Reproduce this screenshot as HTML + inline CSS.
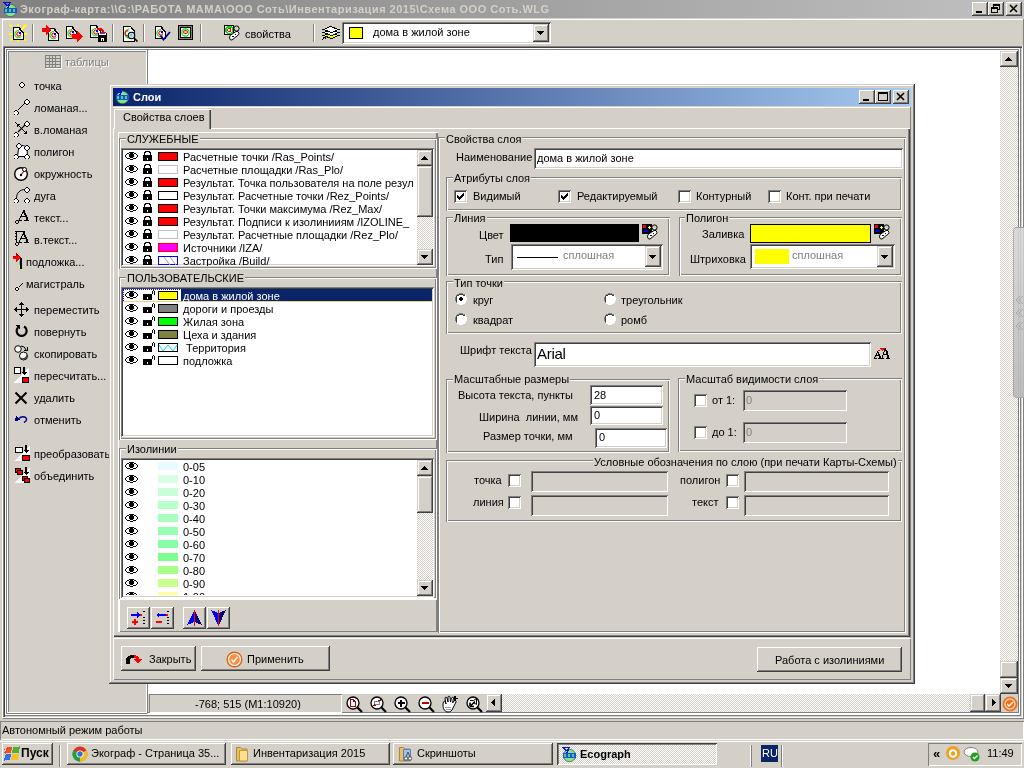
<!DOCTYPE html><html><head><meta charset="utf-8"><style>
html,body{margin:0;padding:0;width:1024px;height:768px;overflow:hidden;background:#d4d0c8}
body div,body svg{position:absolute;box-sizing:border-box}
.t{will-change:transform;font-family:"Liberation Sans",sans-serif;font-size:11px;line-height:13px;white-space:nowrap;color:#000}
.b{font-weight:bold}
</style></head><body>
<div style="left:0px;top:0px;width:1024px;height:18px;background:linear-gradient(to right,#808080,#c0c0c0)"></div>
<div class="t" style="left:20px;top:3px;font-weight:bold;color:#d4d0c8;letter-spacing:0.5px">Экограф-карта:\\G:\РАБОТА МАМА\ООО Соть\Инвентаризация 2015\Схема ООО Соть.WLG</div>
<svg style="left:2px;top:1px" width="16" height="16" viewBox="0 0 16 16" shape-rendering="crispEdges"><circle cx="8.5" cy="9.5" r="6.2" fill="#78e888" stroke="#506050" stroke-width="0.8" shape-rendering="auto"/><rect x="2" y="7" width="13" height="5" fill="#2050e0"/><path d="M3 8h2v3H3zM7 8h2v3H7zM11 8h2v3h-2z" fill="#50d070"/><path d="M1 1.5h8M2 1.5l4 3.5M8 1l-2 6" stroke="#0010e0" stroke-width="1.4" fill="none"/></svg>
<div style="left:972px;top:2px;width:16px;height:14px;background:#d4d0c8;box-shadow:inset -1px -1px #404040,inset 1px 1px #fff,inset -2px -2px #808080,inset 2px 2px #d4d0c8"></div>
<svg style="left:972px;top:2px" width="16" height="14" viewBox="0 0 16 14" shape-rendering="crispEdges"><rect x="4" y="9" width="6" height="2" fill="#000"/></svg>
<div style="left:988px;top:2px;width:16px;height:14px;background:#d4d0c8;box-shadow:inset -1px -1px #404040,inset 1px 1px #fff,inset -2px -2px #808080,inset 2px 2px #d4d0c8"></div>
<svg style="left:991px;top:4px" width="9" height="9" viewBox="0 0 9 9" shape-rendering="crispEdges"><path d="M2 0h7v1h-7zM2 1h7v1h-7zM2 2h1v1h-1zM8 2h1v1h-1zM0 3h7v1h-7zM8 3h1v1h-1zM0 4h7v1h-7zM8 4h1v1h-1zM0 5h1v1h-1zM6 5h3v1h-3zM0 6h1v1h-1zM6 6h1v1h-1zM0 7h1v1h-1zM6 7h1v1h-1zM0 8h7v1h-7z" fill="#000"/></svg>
<div style="left:1006px;top:2px;width:16px;height:14px;background:#d4d0c8;box-shadow:inset -1px -1px #404040,inset 1px 1px #fff,inset -2px -2px #808080,inset 2px 2px #d4d0c8"></div>
<svg style="left:1006px;top:2px" width="16" height="14" viewBox="0 0 16 14" shape-rendering="crispEdges"><path d="M4 3l7 7M11 3l-7 7" stroke="#000" stroke-width="1.6" shape-rendering="auto"/></svg>
<div style="left:2px;top:19px;width:1022px;height:27px;background:#d4d0c8;box-shadow:inset 1px 1px #fff"></div>
<div style="left:32px;top:24px;width:1px;height:18px;background:#808080"></div>
<div style="left:33px;top:24px;width:1px;height:18px;background:#fff"></div>
<div style="left:112px;top:24px;width:1px;height:18px;background:#808080"></div>
<div style="left:113px;top:24px;width:1px;height:18px;background:#fff"></div>
<div style="left:143px;top:24px;width:1px;height:18px;background:#808080"></div>
<div style="left:144px;top:24px;width:1px;height:18px;background:#fff"></div>
<div style="left:200px;top:24px;width:1px;height:18px;background:#808080"></div>
<div style="left:201px;top:24px;width:1px;height:18px;background:#fff"></div>
<div style="left:313px;top:24px;width:1px;height:18px;background:#808080"></div>
<div style="left:314px;top:24px;width:1px;height:18px;background:#fff"></div>
<svg style="left:9px;top:24px" width="18" height="18" viewBox="0 0 18 18" shape-rendering="crispEdges"><path d="M1 1l2 2M17 1l-5 5M1 17l2-2M17 17l-2-2M0 10h3M15 10h3M9 0v2M9 16v2" stroke="#ffff00" stroke-width="1.6"/></svg>
<svg style="left:13px;top:27px" width="11" height="13" viewBox="0 0 11 13" shape-rendering="crispEdges"><path d="M0.5 0.5h5.5l4 4.5v7.5h-9.5z" fill="#fff" stroke="#000"/><path d="M5.5 0.5l4.5 5" stroke="#000" stroke-width="1.3"/><path d="M8.2 9.5A3.6 3.6 0 1 1 6 3.6" fill="none" stroke="#00e000" stroke-width="1.1" shape-rendering="auto"/><path d="M7.8 7.2A2 2 0 1 1 6.5 5.2" fill="none" stroke="#ff0000" stroke-width="1.1" shape-rendering="auto"/><rect x="6" y="5" width="1.5" height="1.5" fill="#0000ff"/></svg>
<svg style="left:48px;top:28px" width="11" height="13" viewBox="0 0 11 13" shape-rendering="crispEdges"><path d="M0.5 0.5h5.5l4 4.5v7.5h-9.5z" fill="#fff" stroke="#000"/><path d="M5.5 0.5l4.5 5" stroke="#000" stroke-width="1.3"/><path d="M8.2 9.5A3.6 3.6 0 1 1 6 3.6" fill="none" stroke="#00e000" stroke-width="1.1" shape-rendering="auto"/><path d="M7.8 7.2A2 2 0 1 1 6.5 5.2" fill="none" stroke="#ff0000" stroke-width="1.1" shape-rendering="auto"/><rect x="6" y="5" width="1.5" height="1.5" fill="#0000ff"/></svg>
<svg style="left:42px;top:25px" width="10" height="11" viewBox="0 0 10 11" shape-rendering="crispEdges"><path d="M0 3h4v-3l5 5-5 5v-3h-4z" fill="#ff0000"/></svg>
<svg style="left:66px;top:26px" width="11" height="13" viewBox="0 0 11 13" shape-rendering="crispEdges"><path d="M0.5 0.5h5.5l4 4.5v7.5h-9.5z" fill="#fff" stroke="#000"/><path d="M5.5 0.5l4.5 5" stroke="#000" stroke-width="1.3"/><path d="M8.2 9.5A3.6 3.6 0 1 1 6 3.6" fill="none" stroke="#00e000" stroke-width="1.1" shape-rendering="auto"/><path d="M7.8 7.2A2 2 0 1 1 6.5 5.2" fill="none" stroke="#ff0000" stroke-width="1.1" shape-rendering="auto"/><rect x="6" y="5" width="1.5" height="1.5" fill="#0000ff"/></svg>
<svg style="left:72px;top:31px" width="11" height="11" viewBox="0 0 11 11" shape-rendering="crispEdges"><path d="M0 3h5v-3l6 5.5-6 5.5v-3h-5z" fill="#ff0000"/></svg>
<svg style="left:90px;top:25px" width="11" height="13" viewBox="0 0 11 13" shape-rendering="crispEdges"><path d="M0.5 0.5h5.5l4 4.5v7.5h-9.5z" fill="#fff" stroke="#000"/><path d="M5.5 0.5l4.5 5" stroke="#000" stroke-width="1.3"/><path d="M8.2 9.5A3.6 3.6 0 1 1 6 3.6" fill="none" stroke="#00e000" stroke-width="1.1" shape-rendering="auto"/><path d="M7.8 7.2A2 2 0 1 1 6.5 5.2" fill="none" stroke="#ff0000" stroke-width="1.1" shape-rendering="auto"/><rect x="6" y="5" width="1.5" height="1.5" fill="#0000ff"/></svg>
<svg style="left:96px;top:26px" width="11" height="16" viewBox="0 0 11 16" shape-rendering="crispEdges"><path d="M1 2h3q3 0 4 3v1h2l-3 3-3-3h2v-1q-1-1-2-1h-3z" fill="#ff0000"/><rect x="2" y="7" width="9" height="9" fill="#000"/><rect x="3" y="7" width="7" height="2" fill="#fff"/><rect x="4" y="7" width="5" height="1" fill="#2050ff"/><rect x="5" y="12" width="3" height="3" fill="#fff"/><rect x="6" y="13" width="1" height="2" fill="#000"/></svg>
<svg style="left:123px;top:26px" width="16" height="16" viewBox="0 0 16 16" shape-rendering="crispEdges"><path d="M0.5 0.5h7l4 4.5v10.5h-11z" fill="#fff" stroke="#000"/><path d="M7.5 0.5l4 4.5" stroke="#000" stroke-width="1.3"/><path d="M8.5 11.5A4.5 4.5 0 1 1 6.5 3" fill="none" stroke="#00e000" stroke-width="1.2" shape-rendering="auto"/><path d="M7 8A2.5 2.5 0 1 1 5.5 5" fill="none" stroke="#ff0000" stroke-width="1.2" shape-rendering="auto"/><circle cx="8.5" cy="9.5" r="3.3" fill="#c0d8e0" stroke="#000" stroke-width="1.1" shape-rendering="auto"/><rect x="7" y="8" width="2" height="2" fill="#40e0ff"/><path d="M11 12l3.5 3.5" stroke="#000" stroke-width="1.6" shape-rendering="auto"/></svg>
<svg style="left:155px;top:26px" width="11" height="13" viewBox="0 0 11 13" shape-rendering="crispEdges"><path d="M0.5 0.5h5.5l4 4.5v7.5h-9.5z" fill="#fff" stroke="#000"/><path d="M5.5 0.5l4.5 5" stroke="#000" stroke-width="1.3"/><path d="M8.2 9.5A3.6 3.6 0 1 1 6 3.6" fill="none" stroke="#00e000" stroke-width="1.1" shape-rendering="auto"/><path d="M7.8 7.2A2 2 0 1 1 6.5 5.2" fill="none" stroke="#ff0000" stroke-width="1.1" shape-rendering="auto"/><rect x="6" y="5" width="1.5" height="1.5" fill="#0000ff"/></svg>
<svg style="left:159px;top:31px" width="12" height="10" viewBox="0 0 12 10" shape-rendering="crispEdges"><path d="M1.5 4.5l3 4 6.5-7.5" fill="none" stroke="#000080" stroke-width="1.8" shape-rendering="auto"/></svg>
<svg style="left:178px;top:25px" width="15" height="15" viewBox="0 0 15 15" shape-rendering="crispEdges"><rect x="0.5" y="0.5" width="14" height="14" fill="#808080" stroke="#000"/><rect x="2.5" y="2.5" width="10" height="10" fill="#fff" stroke="#000"/><circle cx="7.5" cy="7.5" r="3.6" fill="none" stroke="#00e000" stroke-width="1.1" shape-rendering="auto"/><ellipse cx="7.5" cy="7" rx="2" ry="1.5" fill="none" stroke="#ff0000" stroke-width="1.1" shape-rendering="auto"/></svg>
<svg style="left:224px;top:25px" width="17" height="17" viewBox="0 0 17 17" shape-rendering="crispEdges"><rect x="0" y="0" width="10" height="10" fill="#000"/><rect x="1" y="1" width="8" height="8" fill="#fff"/><path d="M3 1h4l2 2v4l-2 2H3L1 7V3z" fill="#00e000"/><path d="M3.5 2.5h3l1 1v3l-1 1h-3l-1-1v-3z" fill="#fff"/><path d="M4 3h2l1 1v2l-1 1H4L3 6V4z" fill="#ff0000"/><rect x="4" y="4" width="2" height="2" fill="#fff"/><circle cx="12.5" cy="3.5" r="2.6" fill="none" stroke="#000" stroke-width="1" shape-rendering="auto"/><path d="M6 10.5L12 6.5Q14.5 5.5 15 8.5Q15 10 13 11L8 15Q6 15.5 5.5 13Z" fill="#fff" stroke="#000" stroke-width="1" shape-rendering="auto"/><path d="M8 11.5h2M11 9h1" stroke="#000"/></svg>
<div class="t" style="left:245px;top:28px;">свойства</div>
<svg style="left:322px;top:26px" width="18" height="15" viewBox="0 0 18 15" shape-rendering="crispEdges"><path d="M1.5 9.5l7-3 8 3-7 3z" fill="#ffff00" stroke="#000"/><path d="M1.5 6.5l7-3 8 3-7 3z" fill="#fff" stroke="#000"/><path d="M1.5 3.5l7-3 8 3-7 3z" fill="#fff" stroke="#000"/><path d="M4 11.5l8 0" stroke="#000" stroke-width="0"/><path d="M0 14l3-3M1 11h2v2" fill="none" stroke="#000"/></svg>
<div style="left:342px;top:22px;width:209px;height:22px;background:#fff;box-shadow:inset 1px 1px #808080,inset -1px -1px #fff,inset 2px 2px #404040,inset -2px -2px #d4d0c8"></div>
<div style="left:349px;top:27px;width:14px;height:12px;background:#ffff00;box-shadow:inset 0 0 0 1px #000"></div>
<div class="t" style="left:373px;top:26px;">дома в жилой зоне</div>
<div style="left:533px;top:24px;width:16px;height:18px;background:#d4d0c8;box-shadow:inset -1px -1px #404040,inset 1px 1px #d4d0c8,inset -2px -2px #808080,inset 2px 2px #fff"></div>
<svg style="left:533px;top:24px" width="16" height="18" viewBox="0 0 16 18" shape-rendering="crispEdges"><path d="M4 7h7v1h-7zM5 8h5v1h-5zM6 9h3v1h-3zM7 10h1v1h-1z" fill="#000"/></svg>
<div style="left:3px;top:46px;width:1020px;height:1px;background:#808080"></div>
<div style="left:3px;top:46px;width:1px;height:672px;background:#808080"></div>
<div style="left:2px;top:46px;width:1px;height:672px;background:#fff"></div>
<div style="left:4px;top:47px;width:1018px;height:1px;background:#404040"></div>
<div style="left:4px;top:47px;width:1px;height:670px;background:#404040"></div>
<div style="left:5px;top:48px;width:1017px;height:1px;background:#fff"></div>
<div style="left:5px;top:48px;width:1px;height:668px;background:#fff"></div>
<div style="left:6px;top:49px;width:1014px;height:1px;background:#808080"></div>
<div style="left:6px;top:49px;width:1px;height:666px;background:#808080"></div>
<div style="left:3px;top:718px;width:1021px;height:1px;background:#808080"></div>
<div style="left:3px;top:717px;width:1020px;height:1px;background:#fff"></div>
<div style="left:1023px;top:19px;width:1px;height:700px;background:#808080"></div>
<div style="left:1022px;top:46px;width:1px;height:672px;background:#fff"></div>
<div style="left:1021px;top:48px;width:1px;height:669px;background:#d4d0c8"></div>
<div style="left:1020px;top:48px;width:1px;height:668px;background:#808080"></div>
<div style="left:1019px;top:49px;width:1px;height:666px;background:#fff"></div>
<div style="left:5px;top:714px;width:1015px;height:1px;background:#fff"></div>
<div style="left:5px;top:715px;width:1016px;height:1px;background:#808080"></div>
<div style="left:5px;top:716px;width:1016px;height:1px;background:#d4d0c8"></div>
<div style="left:7px;top:50px;width:140px;height:1px;background:#fff"></div>
<div style="left:7px;top:50px;width:1px;height:664px;background:#fff"></div>
<div style="left:8px;top:51px;width:138px;height:1px;background:#808080"></div>
<div style="left:8px;top:51px;width:1px;height:662px;background:#808080"></div>
<div style="left:146px;top:50px;width:1px;height:664px;background:#fff"></div>
<div style="left:7px;top:712px;width:140px;height:1px;background:#fff"></div>
<div style="left:7px;top:713px;width:140px;height:1px;background:#808080"></div>
<div style="left:148px;top:50px;width:870px;height:644px;background:#fff"></div>
<div style="left:147px;top:49px;width:1px;height:664px;background:#808080"></div>
<div style="left:1018px;top:50px;width:1px;height:663px;background:#808080"></div>
<div style="left:148px;top:712px;width:871px;height:1px;background:#808080"></div>
<div style="left:148px;top:713px;width:871px;height:1px;background:#fff"></div>
<svg style="left:45px;top:55px" width="17" height="15" viewBox="0 0 17 15" shape-rendering="crispEdges"><rect x="0.5" y="0.5" width="15" height="12" fill="none" stroke="#808080"/><path d="M1 3.5h14M1 6.5h14M1 9.5h14M4.5 1v11M7.5 1v11M10.5 1v11" stroke="#808080"/><path d="M1 13.5h16M16.5 1v13" stroke="#fff"/></svg>
<div class="t" style="left:65px;top:56px;color:#808080;text-shadow:1px 1px #fff">таблицы</div>
<svg style="left:19px;top:82px" width="6" height="6" viewBox="0 0 6 6" shape-rendering="crispEdges"><path d="M2 0h2v1h1v1h1v2h-1v1h-1v1h-2v-1h-1v-1h-1v-2h1v-1h1z" fill="#000"/><path d="M2 1h2v1h1v2h-1v1h-2v-1h-1v-2h1z" fill="#fff"/></svg>
<div class="t" style="left:34px;top:80px;">точка</div>
<svg style="left:14px;top:99px" width="16" height="16" viewBox="0 0 16 16" shape-rendering="crispEdges"><path d="M1 11h2v1h1v1h1v2h-1v1h-1v1h-2v-1h-1v-1h-1v-2h1v-1h1z" fill="#000"/><path d="M1 12h2v1h1v2h-1v1h-2v-1h-1v-2h1z" fill="#fff"/><path d="M12 0h2v1h1v1h1v2h-1v1h-1v1h-2v-1h-1v-1h-1v-2h1v-1h1z" fill="#000"/><path d="M12 1h2v1h1v2h-1v1h-2v-1h-1v-2h1z" fill="#fff"/><path d="M4 11l1-1M5 10l1-1M6 9l1-1M7 8l1-1M8 7l1-1M9 6l1-1M10 5l1-1" stroke="#000"/></svg>
<div class="t" style="left:34px;top:102px;">ломаная...</div>
<svg style="left:14px;top:121px" width="16" height="16" viewBox="0 0 16 16" shape-rendering="crispEdges"><path d="M1 11h2v1h1v1h1v2h-1v1h-1v1h-2v-1h-1v-1h-1v-2h1v-1h1z" fill="#000"/><path d="M1 12h2v1h1v2h-1v1h-2v-1h-1v-2h1z" fill="#fff"/><path d="M12 0h2v1h1v1h1v2h-1v1h-1v1h-2v-1h-1v-1h-1v-2h1v-1h1z" fill="#000"/><path d="M12 1h2v1h1v2h-1v1h-2v-1h-1v-2h1z" fill="#fff"/><path d="M4 11L11 4" stroke="#000" stroke-width="1.2" shape-rendering="auto"/><path d="M1 1L13 13" stroke="#000" shape-rendering="auto"/><path d="M3 3h3v1h-2v2h-1z M10 12h2v-2h1v3h-3z" fill="#000"/></svg>
<div class="t" style="left:34px;top:124px;">в.ломаная</div>
<svg style="left:14px;top:143px" width="16" height="16" viewBox="0 0 16 16" shape-rendering="crispEdges"><path d="M3.5 13.5L5 2.5Q10 2 13 4L13.5 13.5z" fill="#fff" stroke="#000" shape-rendering="auto"/><path d="M4 0h2v1h1v1h1v2h-1v1h-1v1h-2v-1h-1v-1h-1v-2h1v-1h1z" fill="#000"/><path d="M4 1h2v1h1v2h-1v1h-2v-1h-1v-2h1z" fill="#fff"/><path d="M12 2h2v1h1v1h1v2h-1v1h-1v1h-2v-1h-1v-1h-1v-2h1v-1h1z" fill="#000"/><path d="M12 3h2v1h1v2h-1v1h-2v-1h-1v-2h1z" fill="#fff"/><path d="M12 11h2v1h1v1h1v2h-1v1h-1v1h-2v-1h-1v-1h-1v-2h1v-1h1z" fill="#000"/><path d="M12 12h2v1h1v2h-1v1h-2v-1h-1v-2h1z" fill="#fff"/><path d="M1 11h2v1h1v1h1v2h-1v1h-1v1h-2v-1h-1v-1h-1v-2h1v-1h1z" fill="#000"/><path d="M1 12h2v1h1v2h-1v1h-2v-1h-1v-2h1z" fill="#fff"/></svg>
<div class="t" style="left:34px;top:146px;">полигон</div>
<svg style="left:14px;top:166px" width="16" height="15" viewBox="0 0 16 15" shape-rendering="crispEdges"><circle cx="7" cy="8" r="6.3" fill="#fff" stroke="#000" stroke-width="1.4" shape-rendering="auto"/><path d="M7 9l3-4" stroke="#e00000" stroke-width="1.2" shape-rendering="auto"/><circle cx="7" cy="9" r="1.2" fill="#000" shape-rendering="auto"/><circle cx="10.5" cy="3.5" r="2" fill="#fff" stroke="#000" shape-rendering="auto"/></svg>
<div class="t" style="left:34px;top:168px;">окружность</div>
<svg style="left:14px;top:187px" width="16" height="16" viewBox="0 0 16 16" shape-rendering="crispEdges"><path d="M2.5 11C2.5 6 6 2.5 11 2.5" fill="none" stroke="#000" shape-rendering="auto"/><path d="M1 11h2v1h1v1h1v2h-1v1h-1v1h-2v-1h-1v-1h-1v-2h1v-1h1z" fill="#000"/><path d="M1 12h2v1h1v2h-1v1h-2v-1h-1v-2h1z" fill="#fff"/><path d="M12 0h2v1h1v1h1v2h-1v1h-1v1h-2v-1h-1v-1h-1v-2h1v-1h1z" fill="#000"/><path d="M12 1h2v1h1v2h-1v1h-2v-1h-1v-2h1z" fill="#fff"/><path d="M12 11h2v1h1v1h1v2h-1v1h-1v1h-2v-1h-1v-1h-1v-2h1v-1h1z" fill="#000"/><path d="M12 12h2v1h1v2h-1v1h-2v-1h-1v-2h1z" fill="#fff"/></svg>
<div class="t" style="left:34px;top:190px;">дуга</div>
<div class="t" style="left:34px;top:212px;">текст...</div>
<svg style="left:17px;top:210px" width="13" height="11" viewBox="0 0 13 11" shape-rendering="crispEdges"><path d="M6 0h2v1h-2zM6 1h2v1h-2zM5 2h3v1h-3zM5 3h1v1h-1zM7 3h2v1h-2zM4 4h1v1h-1zM7 4h2v1h-2zM4 5h1v1h-1zM8 5h2v1h-2zM3 6h7v1h-7zM3 7h1v1h-1zM9 7h2v1h-2zM2 8h1v1h-1zM9 8h2v1h-2zM2 9h1v1h-1zM9 9h2v1h-2zM1 10h4v1h-4zM7 10h5v1h-5z" fill="#000"/></svg>
<svg style="left:15px;top:220px" width="4" height="4" viewBox="0 0 4 4" shape-rendering="crispEdges"><path d="M1 0h2v1h-2zM0 1h1v1h-1zM3 1h1v1h-1zM0 2h1v1h-1zM3 2h1v1h-1zM1 3h2v1h-2z" fill="#000"/><rect x="3" y="0" width="1" height="1" fill="#c00000"/></svg>
<div class="t" style="left:34px;top:234px;">в.текст...</div>
<svg style="left:17px;top:232px" width="13" height="11" viewBox="0 0 13 11" shape-rendering="crispEdges"><path d="M6 0h2v1h-2zM6 1h2v1h-2zM5 2h3v1h-3zM5 3h1v1h-1zM7 3h2v1h-2zM4 4h1v1h-1zM7 4h2v1h-2zM4 5h1v1h-1zM8 5h2v1h-2zM3 6h7v1h-7zM3 7h1v1h-1zM9 7h2v1h-2zM2 8h1v1h-1zM9 8h2v1h-2zM2 9h1v1h-1zM9 9h2v1h-2zM1 10h4v1h-4zM7 10h5v1h-5z" fill="#000"/></svg>
<svg style="left:15px;top:231px" width="12" height="1" viewBox="0 0 12 1" shape-rendering="crispEdges"><rect width="10" height="1" fill="#000"/></svg>
<svg style="left:15px;top:231px" width="4" height="12" viewBox="0 0 4 12" shape-rendering="crispEdges"><path d="M0 0h4v1h-4zM1 1h1v1h-1zM0 2h2v1h-2zM1 3h1v1h-1zM1 4h1v1h-1zM0 5h2v1h-2zM1 6h1v1h-1zM1 7h1v1h-1zM0 8h2v1h-2zM1 9h1v1h-1zM1 10h1v1h-1z" fill="#000"/></svg>
<svg style="left:15px;top:242px" width="4" height="4" viewBox="0 0 4 4" shape-rendering="crispEdges"><path d="M1 0h2v1h-2zM0 1h1v1h-1zM3 1h1v1h-1zM0 2h1v1h-1zM3 2h1v1h-1zM1 3h2v1h-2z" fill="#000"/><rect x="3" y="0" width="1" height="1" fill="#c00000"/></svg>
<svg style="left:13px;top:253px" width="10" height="16" viewBox="0 0 10 16" shape-rendering="crispEdges"><path d="M0 3h3v-3l5 4.5-5 4.5v-3h-3z" fill="#ff0000"/><path d="M0 3h3v-3l5 4.5" fill="none" stroke="#800000" stroke-width="0.6"/><rect x="7" y="5" width="2" height="11" fill="#000"/><rect x="6" y="8" width="1" height="4" fill="#00e0ff"/><rect x="6" y="12" width="1" height="3" fill="#ffff00"/></svg>
<div class="t" style="left:26px;top:256px;">подложка...</div>
<svg style="left:14px;top:282px" width="10" height="10" viewBox="0 0 10 10" shape-rendering="crispEdges"><path d="M2 5h2v1h1v2h-1v1h-2v-1h-1v-2h1z" fill="#000"/><path d="M2 6h2v2h-2z" fill="#fff"/><path d="M5 5L9 1" stroke="#000" shape-rendering="auto"/></svg>
<div class="t" style="left:26px;top:278px;">магистраль</div>
<svg style="left:14px;top:302px" width="16" height="16" viewBox="0 0 16 16" shape-rendering="crispEdges"><path d="M7.5 2v11M2 7.5h11" stroke="#000"/><path d="M7.5 0l-3 3h6z M7.5 15l-3-3h6z M0 7.5l3-3v6z M15 7.5l-3-3v6z" fill="#000"/></svg>
<div class="t" style="left:34px;top:304px;">переместить</div>
<svg style="left:14px;top:324px" width="16" height="14" viewBox="0 0 16 14" shape-rendering="crispEdges"><path d="M4 3.5A5 5 0 1 0 10 2.5" fill="none" stroke="#000" stroke-width="2.2" shape-rendering="auto"/><path d="M1 1h5v5z" fill="#000"/></svg>
<div class="t" style="left:34px;top:326px;">повернуть</div>
<svg style="left:14px;top:345px" width="16" height="16" viewBox="0 0 16 16" shape-rendering="crispEdges"><circle cx="4" cy="4" r="3.3" fill="#fff" stroke="#000" shape-rendering="auto"/><circle cx="9.5" cy="11" r="4" fill="#fff" stroke="#000" shape-rendering="auto"/><path d="M6.5 13A4 4 0 0 0 13 10" fill="none" stroke="#404040" stroke-width="1.5" shape-rendering="auto"/><path d="M7 1q4 0 5 4" fill="none" stroke="#000" shape-rendering="auto"/><path d="M10 5h3v-3" fill="none" stroke="#000"/></svg>
<div class="t" style="left:34px;top:348px;">скопировать</div>
<svg style="left:14px;top:367px" width="16" height="16" viewBox="0 0 16 16" shape-rendering="crispEdges"><path d="M0 16L15 0v16z" fill="#fff"/><rect x="0.5" y="0.5" width="6" height="6" fill="#fff" stroke="#000"/><path d="M9 0h2v5h2l-3 3-3-3h2z" fill="#000"/><rect x="8.5" y="10.5" width="6" height="5" fill="#ff0000" stroke="#000"/></svg>
<div class="t" style="left:34px;top:370px;">пересчитать...</div>
<svg style="left:14px;top:391px" width="15" height="14" viewBox="0 0 15 14" shape-rendering="crispEdges"><path d="M1.5 1.5l11 11M12.5 1.5l-11 11" stroke="#000" stroke-width="2" shape-rendering="auto"/></svg>
<div class="t" style="left:34px;top:392px;">удалить</div>
<svg style="left:15px;top:415px" width="13" height="8" viewBox="0 0 13 8" shape-rendering="crispEdges"><path d="M4 3.5C6 1 11 1 11.5 4C12 6 10 7 9 7.5" fill="none" stroke="#000080" stroke-width="1.4" shape-rendering="auto"/><path d="M0 6l1-5 4 4z" fill="#000080"/></svg>
<div class="t" style="left:34px;top:414px;">отменить</div>
<svg style="left:15px;top:445px" width="16" height="16" viewBox="0 0 16 16" shape-rendering="crispEdges"><path d="M0 16L15 0v16z" fill="#fff"/><rect x="0.5" y="2.5" width="7" height="5" fill="#fff" stroke="#000"/><path d="M10 0h2v5h2l-3 3-3-3h2z" fill="#000"/><rect x="7.5" y="10.5" width="7" height="5" fill="#ff0000" stroke="#000"/></svg>
<div class="t" style="left:34px;top:448px;">преобразовать</div>
<svg style="left:15px;top:467px" width="16" height="16" viewBox="0 0 16 16" shape-rendering="crispEdges"><path d="M0 16L15 0v16z" fill="#fff"/><rect x="0.5" y="1.5" width="5" height="4" fill="#ff0000" stroke="#000"/><rect x="2.5" y="3.5" width="5" height="4" fill="#ff0000" stroke="#000"/><path d="M10 0h2v5h2l-3 3-3-3h2z" fill="#000"/><rect x="7.5" y="9.5" width="5" height="4" fill="#ff0000" stroke="#000"/><rect x="9.5" y="11.5" width="5" height="4" fill="#ff0000" stroke="#000"/></svg>
<div class="t" style="left:34px;top:470px;">объединить</div>
<div style="left:1000px;top:51px;width:18px;height:643px;background-color:#fff;background-image:linear-gradient(45deg,#d4d0c8 25%,transparent 25%,transparent 75%,#d4d0c8 75%),linear-gradient(45deg,#d4d0c8 25%,transparent 25%,transparent 75%,#d4d0c8 75%);background-size:2px 2px;background-position:0 0,1px 1px"></div>
<div style="left:1000px;top:51px;width:18px;height:16px;background:#d4d0c8;box-shadow:inset -1px -1px #404040,inset 1px 1px #d4d0c8,inset -2px -2px #808080,inset 2px 2px #fff"></div>
<svg style="left:1000px;top:51px" width="18" height="16" viewBox="0 0 18 16" shape-rendering="crispEdges"><path d="M8 6h1v1h-1zM7 7h3v1h-3zM6 8h5v1h-5zM5 9h7v1h-7z" fill="#000"/></svg>
<div style="left:1000px;top:661px;width:18px;height:17px;background:#d4d0c8;box-shadow:inset -1px -1px #404040,inset 1px 1px #d4d0c8,inset -2px -2px #808080,inset 2px 2px #fff"></div>
<div style="left:1000px;top:678px;width:18px;height:16px;background:#d4d0c8;box-shadow:inset -1px -1px #404040,inset 1px 1px #d4d0c8,inset -2px -2px #808080,inset 2px 2px #fff"></div>
<svg style="left:1000px;top:678px" width="18" height="16" viewBox="0 0 18 16" shape-rendering="crispEdges"><path d="M5 6h7v1h-7zM6 7h5v1h-5zM7 8h3v1h-3zM8 9h1v1h-1z" fill="#000"/></svg>
<div style="left:1013px;top:227px;width:11px;height:171px;background:linear-gradient(to bottom,rgba(215,215,215,0.85),rgba(185,185,185,0.9));border-radius:4px 0 0 4px;border:1px solid rgba(150,150,150,0.6);border-right:0"></div>
<svg style="left:1014px;top:295px" width="10" height="40" viewBox="0 0 10 40" shape-rendering="crispEdges"><path d="M6 1L2 5l4 4M9 1L5 5l4 4M6 14L2 18l4 4M9 14L5 18l4 4M6 27L2 31l4 4M9 27L5 31l4 4" fill="none" stroke="#a8a8a8" stroke-width="1" shape-rendering="auto"/></svg>
<div style="left:148px;top:694px;width:852px;height:18px;background:#d4d0c8"></div>
<div style="left:149px;top:694px;width:193px;height:19px;background:#d4d0c8;box-shadow:inset 1px 1px #808080,inset -1px -1px #fff"></div>
<div class="t" style="left:195px;top:698px;">-768; 515 (М1:10920)</div>
<svg style="left:346px;top:696px" width="18" height="17" viewBox="0 0 18 17" shape-rendering="crispEdges"><circle cx="7" cy="7" r="6" fill="#fff" stroke="#000" stroke-width="1.3" shape-rendering="auto"/><path d="M11.5 11.5l4.5 4.5" stroke="#000" stroke-width="2.2" shape-rendering="auto"/><path d="M4.5 3.5h3l2 2v5h-5z" fill="#fff" stroke="#a00000"/><path d="M7.5 3.5v2h2" fill="none" stroke="#a00000"/></svg>
<svg style="left:370px;top:696px" width="18" height="17" viewBox="0 0 18 17" shape-rendering="crispEdges"><circle cx="7" cy="7" r="6" fill="#fff" stroke="#000" stroke-width="1.3" shape-rendering="auto"/><path d="M11.5 11.5l4.5 4.5" stroke="#000" stroke-width="2.2" shape-rendering="auto"/><rect x="4.5" y="5.5" width="5" height="3" fill="none" stroke="#808080"/><path d="M8 4h3M10 3v2M3 9h3M4 8v2" stroke="#a00000"/></svg>
<svg style="left:394px;top:696px" width="18" height="17" viewBox="0 0 18 17" shape-rendering="crispEdges"><circle cx="7" cy="7" r="6" fill="#fff" stroke="#000" stroke-width="1.3" shape-rendering="auto"/><path d="M11.5 11.5l4.5 4.5" stroke="#000" stroke-width="2.2" shape-rendering="auto"/><path d="M3.5 7h7M7 3.5v7" stroke="#000" stroke-width="1.3"/></svg>
<svg style="left:418px;top:696px" width="18" height="17" viewBox="0 0 18 17" shape-rendering="crispEdges"><circle cx="7" cy="7" r="6" fill="#fff" stroke="#000" stroke-width="1.3" shape-rendering="auto"/><path d="M11.5 11.5l4.5 4.5" stroke="#000" stroke-width="2.2" shape-rendering="auto"/><path d="M3.5 7h7" stroke="#c00000" stroke-width="1.5"/></svg>
<svg style="left:441px;top:695px" width="20" height="18" viewBox="0 0 20 18" shape-rendering="crispEdges"><path d="M2 10C2 7 3 6 4 6L5 9 4 3C4 2 6 2 6 3L7 7 7 2C7 1 9 1 9 2L9.5 7 10.5 3C11 2 12.5 2 12.5 3L11.5 8 13 6C14 5 15.5 6 15 7L12 13C11 16 9 17 7 17 4 17 2 14 2 10Z" fill="#fff" stroke="#000" shape-rendering="auto"/><path d="M14 1v5M11.5 3.5h5" stroke="#000" stroke-width="1.2"/><path d="M4 12h6M5 14h5" stroke="#a0a0a0"/></svg>
<svg style="left:466px;top:696px" width="18" height="17" viewBox="0 0 18 17" shape-rendering="crispEdges"><circle cx="7" cy="7" r="6" fill="#fff" stroke="#000" stroke-width="1.3" shape-rendering="auto"/><path d="M4 4.5h3.5l3 -2v6l-3-2" fill="none" stroke="#000" stroke-width="1" shape-rendering="auto"/><path d="M4 10.5l5-5M4 10.5v-4M4 10.5h4" fill="none" stroke="#000" stroke-width="1.6" shape-rendering="auto"/><path d="M11.5 11.5l4.5 4.5" stroke="#000" stroke-width="2.2" shape-rendering="auto"/></svg>
<div style="left:486px;top:694px;width:484px;height:18px;background-color:#fff;background-image:linear-gradient(45deg,#d4d0c8 25%,transparent 25%,transparent 75%,#d4d0c8 75%),linear-gradient(45deg,#d4d0c8 25%,transparent 25%,transparent 75%,#d4d0c8 75%);background-size:2px 2px;background-position:0 0,1px 1px"></div>
<div style="left:486px;top:694px;width:16px;height:18px;background:#d4d0c8;box-shadow:inset -1px -1px #404040,inset 1px 1px #d4d0c8,inset -2px -2px #808080,inset 2px 2px #fff"></div>
<svg style="left:486px;top:694px" width="16" height="18" viewBox="0 0 16 18" shape-rendering="crispEdges"><path d="M5 8h1v1h-1zM6 7h1v3h-1zM7 6h1v5h-1zM8 5h1v7h-1z" fill="#000"/></svg>
<div style="left:970px;top:694px;width:15px;height:18px;background:#d4d0c8;box-shadow:inset -1px -1px #404040,inset 1px 1px #d4d0c8,inset -2px -2px #808080,inset 2px 2px #fff"></div>
<div style="left:985px;top:694px;width:16px;height:18px;background:#d4d0c8;box-shadow:inset -1px -1px #404040,inset 1px 1px #d4d0c8,inset -2px -2px #808080,inset 2px 2px #fff"></div>
<svg style="left:985px;top:694px" width="16" height="18" viewBox="0 0 16 18" shape-rendering="crispEdges"><path d="M7 5h1v7h-1zM8 6h1v5h-1zM9 7h1v3h-1zM10 8h1v1h-1z" fill="#000"/></svg>
<svg style="left:1002px;top:696px" width="16" height="16" viewBox="0 0 16 16" shape-rendering="crispEdges"><circle cx="8" cy="8" r="7.5" fill="#f07020" shape-rendering="auto"/><circle cx="8" cy="8" r="5" fill="none" stroke="#ffd0a0" stroke-width="1.4" shape-rendering="auto"/><path d="M5 8l2 2 4-4" fill="none" stroke="#fff" stroke-width="1.4" shape-rendering="auto"/></svg>
<div style="left:0px;top:721px;width:1024px;height:19px;background:#d4d0c8;box-shadow:inset 1px 1px #808080,inset -1px -1px #fff"></div>
<div class="t" style="left:2px;top:724px;">Автономный режим работы</div>
<div style="left:0px;top:740px;width:1024px;height:28px;background:#d4d0c8;box-shadow:inset 0 1px #d4d0c8,inset 0 2px #fff"></div>
<div style="left:2px;top:743px;width:51px;height:22px;background:#d4d0c8;box-shadow:inset -1px -1px #404040,inset 1px 1px #fff,inset -2px -2px #808080,inset 2px 2px #d4d0c8"></div>
<svg style="left:4px;top:745px" width="17" height="17" viewBox="0 0 17 17" shape-rendering="crispEdges"><path d="M2 3Q5 1 8 2L7 8Q4 7 1 9z" fill="#f05020"/><path d="M9 2Q12 3 16 1L15 8Q12 9 8 8z" fill="#50b030"/><path d="M1 10Q4 8 7 9L6 15Q3 14 0 16z" fill="#3070e0"/><path d="M8 9Q11 10 15 9L14 15Q11 16 7 15z" fill="#f8c020"/><path d="M0 5l1-1M0 8l1-1M0 12l0.5-0.5" stroke="#606060" stroke-width="0.8"/></svg>
<div class="t" style="left:21px;top:747px;font-weight:bold;font-size:12px">Пуск</div>
<div style="left:59px;top:745px;width:1px;height:22px;background:#808080"></div>
<div style="left:60px;top:745px;width:1px;height:22px;background:#fff"></div>
<div style="left:67px;top:743px;width:159px;height:22px;background:#d4d0c8;box-shadow:inset -1px -1px #404040,inset 1px 1px #fff,inset -2px -2px #808080,inset 2px 2px #d4d0c8"></div>
<svg style="left:72px;top:746px" width="16" height="16" viewBox="0 0 16 16" shape-rendering="crispEdges"><circle cx="8" cy="8" r="7.5" fill="#e03020" shape-rendering="auto"/><path d="M8 8L1.5 4.2A7.5 7.5 0 0 0 8 15.5z" fill="#20a040" shape-rendering="auto"/><path d="M8 8v7.5A7.5 7.5 0 0 0 14.5 4.2z" fill="#f0c020" shape-rendering="auto"/><circle cx="8" cy="8" r="3.6" fill="#fff" shape-rendering="auto"/><circle cx="8" cy="8" r="2.7" fill="#3070e0" shape-rendering="auto"/></svg>
<div class="t" style="left:91px;top:747px;">Экограф - Страница 35...</div>
<div style="left:231px;top:743px;width:159px;height:22px;background:#d4d0c8;box-shadow:inset -1px -1px #404040,inset 1px 1px #fff,inset -2px -2px #808080,inset 2px 2px #d4d0c8"></div>
<svg style="left:235px;top:745px" width="16" height="17" viewBox="0 0 16 17" shape-rendering="crispEdges"><path d="M1.5 2.5h4l1.5 1.5h5v12h-10.5z" fill="#e8c060" stroke="#b08830" shape-rendering="auto"/><path d="M4.5 5.5h8v10.5h-8z" fill="#f8e090" stroke="#c09840" shape-rendering="auto"/></svg>
<div class="t" style="left:253px;top:747px;">Инвентаризация 2015</div>
<div style="left:393px;top:743px;width:160px;height:22px;background:#d4d0c8;box-shadow:inset -1px -1px #404040,inset 1px 1px #fff,inset -2px -2px #808080,inset 2px 2px #d4d0c8"></div>
<svg style="left:398px;top:745px" width="16" height="17" viewBox="0 0 16 17" shape-rendering="crispEdges"><path d="M1.5 2.5h4l1.5 1.5h5v12h-10.5z" fill="#e8c060" stroke="#b08830" shape-rendering="auto"/><path d="M5.5 4.5h7v11h-7z" fill="#a0c0f0" stroke="#6080c0" shape-rendering="auto"/><circle cx="8" cy="13.5" r="1.7" fill="#fff" stroke="#505050" shape-rendering="auto"/><circle cx="12" cy="13.5" r="1.7" fill="#fff" stroke="#505050" shape-rendering="auto"/><path d="M8 12l2-5M12 12l-2-5" stroke="#505050" shape-rendering="auto"/></svg>
<div class="t" style="left:417px;top:747px;">Скриншоты</div>
<div style="left:557px;top:743px;width:160px;height:22px;background-color:#fff;background-image:linear-gradient(45deg,#d4d0c8 25%,transparent 25%,transparent 75%,#d4d0c8 75%),linear-gradient(45deg,#d4d0c8 25%,transparent 25%,transparent 75%,#d4d0c8 75%);background-size:2px 2px;background-position:0 0,1px 1px;box-shadow:inset 1px 1px #404040,inset -1px -1px #fff,inset 2px 2px #808080"></div>
<svg style="left:561px;top:746px" width="16" height="16" viewBox="0 0 16 16" shape-rendering="crispEdges"><circle cx="8.5" cy="9.5" r="6.2" fill="#78e888" stroke="#506050" stroke-width="0.8" shape-rendering="auto"/><rect x="2" y="7" width="13" height="5" fill="#2050e0"/><path d="M3 8h2v3H3zM7 8h2v3H7zM11 8h2v3h-2z" fill="#50d070"/><path d="M1 1.5h8M2 1.5l4 3.5M8 1l-2 6" stroke="#0010e0" stroke-width="1.4" fill="none"/></svg>
<div class="t" style="left:580px;top:748px;font-weight:bold">Ecograph</div>
<div style="left:750px;top:745px;width:1px;height:22px;background:#fff"></div>
<div style="left:751px;top:745px;width:1px;height:22px;background:#808080"></div>
<div style="left:761px;top:745px;width:17px;height:17px;background:#0a246a"></div>
<div class="t" style="left:762px;top:747px;color:#fff">RU</div>
<div style="left:781px;top:745px;width:1px;height:22px;background:#808080"></div>
<div style="left:782px;top:745px;width:1px;height:22px;background:#fff"></div>
<div style="left:928px;top:743px;width:94px;height:23px;background:#d4d0c8;box-shadow:inset 1px 1px #808080,inset -1px -1px #fff"></div>
<div class="t" style="left:933px;top:747px;font-weight:bold;font-size:13px">«</div>
<svg style="left:945px;top:745px" width="16" height="16" viewBox="0 0 16 16" shape-rendering="crispEdges"><circle cx="8" cy="8" r="7" fill="#f0a020" shape-rendering="auto"/><circle cx="8" cy="8.5" r="3.2" fill="none" stroke="#fff" stroke-width="2" shape-rendering="auto"/></svg>
<svg style="left:963px;top:745px" width="18" height="17" viewBox="0 0 18 17" shape-rendering="crispEdges"><ellipse cx="8" cy="7" rx="7" ry="4.5" fill="#fff" stroke="#808080" shape-rendering="auto"/><circle cx="12" cy="12" r="4.5" fill="#20a020" shape-rendering="auto"/><path d="M10 12l1.5 1.5 3-3" fill="none" stroke="#fff" stroke-width="1.3" shape-rendering="auto"/></svg>
<div class="t" style="left:987px;top:747px;">11:49</div>
<div style="left:109px;top:84px;width:806px;height:600px;background:#d4d0c8;box-shadow:inset -1px -1px #404040,inset 1px 1px #d4d0c8,inset -2px -2px #808080,inset 2px 2px #fff"></div>
<div style="left:113px;top:88px;width:798px;height:18px;background:linear-gradient(to right,#0a246a,#a6caf0)"></div>
<svg style="left:114px;top:88px" width="16" height="16" viewBox="0 0 16 16" shape-rendering="crispEdges"><circle cx="8.5" cy="9.5" r="6.2" fill="#78e888" stroke="#506050" stroke-width="0.8" shape-rendering="auto"/><rect x="2" y="7" width="13" height="5" fill="#2050e0"/><path d="M3 8h2v3H3zM7 8h2v3H7zM11 8h2v3h-2z" fill="#50d070"/><path d="M1 1.5h8M2 1.5l4 3.5M8 1l-2 6" stroke="#0010e0" stroke-width="1.4" fill="none"/></svg>
<div class="t" style="left:133px;top:91px;font-weight:bold;color:#fff">Слои</div>
<div style="left:859px;top:90px;width:16px;height:14px;background:#d4d0c8;box-shadow:inset -1px -1px #404040,inset 1px 1px #fff,inset -2px -2px #808080,inset 2px 2px #d4d0c8"></div>
<svg style="left:859px;top:90px" width="16" height="14" viewBox="0 0 16 14" shape-rendering="crispEdges"><rect x="4" y="9" width="6" height="2" fill="#000"/></svg>
<div style="left:875px;top:90px;width:16px;height:14px;background:#d4d0c8;box-shadow:inset -1px -1px #404040,inset 1px 1px #fff,inset -2px -2px #808080,inset 2px 2px #d4d0c8"></div>
<svg style="left:875px;top:90px" width="16" height="14" viewBox="0 0 16 14" shape-rendering="crispEdges"><rect x="3.5" y="2.5" width="9" height="8" fill="none" stroke="#000"/><rect x="3" y="2" width="10" height="2" fill="#000"/></svg>
<div style="left:893px;top:90px;width:16px;height:14px;background:#d4d0c8;box-shadow:inset -1px -1px #404040,inset 1px 1px #fff,inset -2px -2px #808080,inset 2px 2px #d4d0c8"></div>
<svg style="left:893px;top:90px" width="16" height="14" viewBox="0 0 16 14" shape-rendering="crispEdges"><path d="M4 3l7 7M11 3l-7 7" stroke="#000" stroke-width="1.6" shape-rendering="auto"/></svg>
<div style="left:113px;top:107px;width:797px;height:1px;background:#fff"></div>
<div style="left:910px;top:107px;width:1px;height:531px;background:#808080"></div>
<div style="left:113px;top:128px;width:797px;height:509px;box-shadow:inset 1px 1px #fff,inset -1px -1px #404040,inset -2px -2px #808080"></div>
<div style="left:114px;top:109px;width:97px;height:20px;background:#d4d0c8;box-shadow:inset 1px 1px #fff,inset -1px 0 #404040,inset -2px 0 #808080"></div>
<div style="left:115px;top:128px;width:94px;height:1px;background:#d4d0c8"></div>
<div class="t" style="left:123px;top:111px;">Свойства слоев</div>
<div style="left:118px;top:132px;width:320px;height:500px;box-shadow:inset 1px 1px #fff,inset -2px -1px #808080"></div>
<div style="left:119px;top:138px;width:318px;height:131px;box-shadow:inset 1px 1px #808080,inset -1px -1px #fff,inset 2px 2px #fff,inset -2px -2px #808080"></div>
<div class="t" style="left:126px;top:133px;background:#d4d0c8;padding:0 1px">СЛУЖЕБНЫЕ</div>
<div style="left:121px;top:148px;width:313px;height:118px;background:#fff;box-shadow:inset 1px 1px #808080,inset -1px -1px #fff,inset 2px 2px #404040,inset -2px -2px #d4d0c8"></div>
<div style="left:123px;top:150px;width:294px;height:116px;overflow:hidden">
<svg style="left:2px;top:2px" width="13" height="8" viewBox="0 0 13 8" shape-rendering="crispEdges"><path d="M4 0h5v1h-5zM2 1h2v1h-2zM5 1h3v1h-3zM9 1h2v1h-2zM1 2h1v1h-1zM4 2h5v1h-5zM11 2h1v1h-1zM0 3h1v1h-1zM4 3h5v1h-5zM12 3h1v1h-1zM0 4h1v1h-1zM4 4h5v1h-5zM12 4h1v1h-1zM1 5h1v1h-1zM5 5h3v1h-3zM11 5h1v1h-1zM2 6h3v1h-3zM8 6h3v1h-3zM5 7h3v1h-3z" fill="#000"/></svg>
<svg style="left:20px;top:1px" width="9" height="10" viewBox="0 0 9 10" shape-rendering="crispEdges"><path d="M2 0h5v1h-5zM1 1h2v1h-2zM6 1h2v1h-2zM1 2h1v1h-1zM7 2h1v1h-1zM1 3h1v1h-1zM7 3h1v1h-1zM0 4h9v1h-9zM0 5h9v1h-9zM0 6h9v1h-9zM0 7h4v1h-4zM5 7h4v1h-4zM0 8h4v1h-4zM5 8h4v1h-4zM0 9h9v1h-9z" fill="#000"/></svg>
<div style="left:35px;top:2px;width:20px;height:9px;background:#ff0000;box-shadow:inset 0 0 0 1px #000"></div>
<div class="t" style="left:60px;top:1px;">Расчетные точки /Ras_Points/</div>
<svg style="left:2px;top:15px" width="13" height="8" viewBox="0 0 13 8" shape-rendering="crispEdges"><path d="M4 0h5v1h-5zM2 1h2v1h-2zM5 1h3v1h-3zM9 1h2v1h-2zM1 2h1v1h-1zM4 2h5v1h-5zM11 2h1v1h-1zM0 3h1v1h-1zM4 3h5v1h-5zM12 3h1v1h-1zM0 4h1v1h-1zM4 4h5v1h-5zM12 4h1v1h-1zM1 5h1v1h-1zM5 5h3v1h-3zM11 5h1v1h-1zM2 6h3v1h-3zM8 6h3v1h-3zM5 7h3v1h-3z" fill="#000"/></svg>
<svg style="left:20px;top:14px" width="9" height="10" viewBox="0 0 9 10" shape-rendering="crispEdges"><path d="M2 0h5v1h-5zM1 1h2v1h-2zM6 1h2v1h-2zM1 2h1v1h-1zM7 2h1v1h-1zM1 3h1v1h-1zM7 3h1v1h-1zM0 4h9v1h-9zM0 5h9v1h-9zM0 6h9v1h-9zM0 7h4v1h-4zM5 7h4v1h-4zM0 8h4v1h-4zM5 8h4v1h-4zM0 9h9v1h-9z" fill="#000"/></svg>
<div style="left:35px;top:15px;width:20px;height:9px;background:#fff;box-shadow:inset 0 0 0 1px #c0c0c0"></div>
<div class="t" style="left:60px;top:14px;">Расчетные площадки /Ras_Plo/</div>
<svg style="left:2px;top:28px" width="13" height="8" viewBox="0 0 13 8" shape-rendering="crispEdges"><path d="M4 0h5v1h-5zM2 1h2v1h-2zM5 1h3v1h-3zM9 1h2v1h-2zM1 2h1v1h-1zM4 2h5v1h-5zM11 2h1v1h-1zM0 3h1v1h-1zM4 3h5v1h-5zM12 3h1v1h-1zM0 4h1v1h-1zM4 4h5v1h-5zM12 4h1v1h-1zM1 5h1v1h-1zM5 5h3v1h-3zM11 5h1v1h-1zM2 6h3v1h-3zM8 6h3v1h-3zM5 7h3v1h-3z" fill="#000"/></svg>
<svg style="left:20px;top:27px" width="9" height="10" viewBox="0 0 9 10" shape-rendering="crispEdges"><path d="M2 0h5v1h-5zM1 1h2v1h-2zM6 1h2v1h-2zM1 2h1v1h-1zM7 2h1v1h-1zM1 3h1v1h-1zM7 3h1v1h-1zM0 4h9v1h-9zM0 5h9v1h-9zM0 6h9v1h-9zM0 7h4v1h-4zM5 7h4v1h-4zM0 8h4v1h-4zM5 8h4v1h-4zM0 9h9v1h-9z" fill="#000"/></svg>
<div style="left:35px;top:28px;width:20px;height:9px;background:#ff0000;box-shadow:inset 0 0 0 1px #000"></div>
<div class="t" style="left:60px;top:27px;">Результат. Точка пользователя на поле резул</div>
<svg style="left:2px;top:41px" width="13" height="8" viewBox="0 0 13 8" shape-rendering="crispEdges"><path d="M4 0h5v1h-5zM2 1h2v1h-2zM5 1h3v1h-3zM9 1h2v1h-2zM1 2h1v1h-1zM4 2h5v1h-5zM11 2h1v1h-1zM0 3h1v1h-1zM4 3h5v1h-5zM12 3h1v1h-1zM0 4h1v1h-1zM4 4h5v1h-5zM12 4h1v1h-1zM1 5h1v1h-1zM5 5h3v1h-3zM11 5h1v1h-1zM2 6h3v1h-3zM8 6h3v1h-3zM5 7h3v1h-3z" fill="#000"/></svg>
<svg style="left:20px;top:40px" width="9" height="10" viewBox="0 0 9 10" shape-rendering="crispEdges"><path d="M2 0h5v1h-5zM1 1h2v1h-2zM6 1h2v1h-2zM1 2h1v1h-1zM7 2h1v1h-1zM1 3h1v1h-1zM7 3h1v1h-1zM0 4h9v1h-9zM0 5h9v1h-9zM0 6h9v1h-9zM0 7h4v1h-4zM5 7h4v1h-4zM0 8h4v1h-4zM5 8h4v1h-4zM0 9h9v1h-9z" fill="#000"/></svg>
<div style="left:35px;top:41px;width:20px;height:9px;background:#fff;box-shadow:inset 0 0 0 1px #000"></div>
<div class="t" style="left:60px;top:40px;">Результат. Расчетные точки /Rez_Points/</div>
<svg style="left:2px;top:54px" width="13" height="8" viewBox="0 0 13 8" shape-rendering="crispEdges"><path d="M4 0h5v1h-5zM2 1h2v1h-2zM5 1h3v1h-3zM9 1h2v1h-2zM1 2h1v1h-1zM4 2h5v1h-5zM11 2h1v1h-1zM0 3h1v1h-1zM4 3h5v1h-5zM12 3h1v1h-1zM0 4h1v1h-1zM4 4h5v1h-5zM12 4h1v1h-1zM1 5h1v1h-1zM5 5h3v1h-3zM11 5h1v1h-1zM2 6h3v1h-3zM8 6h3v1h-3zM5 7h3v1h-3z" fill="#000"/></svg>
<svg style="left:20px;top:53px" width="9" height="10" viewBox="0 0 9 10" shape-rendering="crispEdges"><path d="M2 0h5v1h-5zM1 1h2v1h-2zM6 1h2v1h-2zM1 2h1v1h-1zM7 2h1v1h-1zM1 3h1v1h-1zM7 3h1v1h-1zM0 4h9v1h-9zM0 5h9v1h-9zM0 6h9v1h-9zM0 7h4v1h-4zM5 7h4v1h-4zM0 8h4v1h-4zM5 8h4v1h-4zM0 9h9v1h-9z" fill="#000"/></svg>
<div style="left:35px;top:54px;width:20px;height:9px;background:#ff0000;box-shadow:inset 0 0 0 1px #000"></div>
<div class="t" style="left:60px;top:53px;">Результат. Точки максимума /Rez_Max/</div>
<svg style="left:2px;top:67px" width="13" height="8" viewBox="0 0 13 8" shape-rendering="crispEdges"><path d="M4 0h5v1h-5zM2 1h2v1h-2zM5 1h3v1h-3zM9 1h2v1h-2zM1 2h1v1h-1zM4 2h5v1h-5zM11 2h1v1h-1zM0 3h1v1h-1zM4 3h5v1h-5zM12 3h1v1h-1zM0 4h1v1h-1zM4 4h5v1h-5zM12 4h1v1h-1zM1 5h1v1h-1zM5 5h3v1h-3zM11 5h1v1h-1zM2 6h3v1h-3zM8 6h3v1h-3zM5 7h3v1h-3z" fill="#000"/></svg>
<svg style="left:20px;top:66px" width="9" height="10" viewBox="0 0 9 10" shape-rendering="crispEdges"><path d="M2 0h5v1h-5zM1 1h2v1h-2zM6 1h2v1h-2zM1 2h1v1h-1zM7 2h1v1h-1zM1 3h1v1h-1zM7 3h1v1h-1zM0 4h9v1h-9zM0 5h9v1h-9zM0 6h9v1h-9zM0 7h4v1h-4zM5 7h4v1h-4zM0 8h4v1h-4zM5 8h4v1h-4zM0 9h9v1h-9z" fill="#000"/></svg>
<div style="left:35px;top:67px;width:20px;height:9px;background:#ff0000;box-shadow:inset 0 0 0 1px #000"></div>
<div class="t" style="left:60px;top:66px;">Результат. Подписи к изолинииям /IZOLINE_</div>
<svg style="left:2px;top:80px" width="13" height="8" viewBox="0 0 13 8" shape-rendering="crispEdges"><path d="M4 0h5v1h-5zM2 1h2v1h-2zM5 1h3v1h-3zM9 1h2v1h-2zM1 2h1v1h-1zM4 2h5v1h-5zM11 2h1v1h-1zM0 3h1v1h-1zM4 3h5v1h-5zM12 3h1v1h-1zM0 4h1v1h-1zM4 4h5v1h-5zM12 4h1v1h-1zM1 5h1v1h-1zM5 5h3v1h-3zM11 5h1v1h-1zM2 6h3v1h-3zM8 6h3v1h-3zM5 7h3v1h-3z" fill="#000"/></svg>
<svg style="left:20px;top:79px" width="9" height="10" viewBox="0 0 9 10" shape-rendering="crispEdges"><path d="M2 0h5v1h-5zM1 1h2v1h-2zM6 1h2v1h-2zM1 2h1v1h-1zM7 2h1v1h-1zM1 3h1v1h-1zM7 3h1v1h-1zM0 4h9v1h-9zM0 5h9v1h-9zM0 6h9v1h-9zM0 7h4v1h-4zM5 7h4v1h-4zM0 8h4v1h-4zM5 8h4v1h-4zM0 9h9v1h-9z" fill="#000"/></svg>
<div style="left:35px;top:80px;width:20px;height:9px;background:#fff;box-shadow:inset 0 0 0 1px #c0c0c0"></div>
<div class="t" style="left:60px;top:79px;">Результат. Расчетные площадки /Rez_Plo/</div>
<svg style="left:2px;top:93px" width="13" height="8" viewBox="0 0 13 8" shape-rendering="crispEdges"><path d="M4 0h5v1h-5zM2 1h2v1h-2zM5 1h3v1h-3zM9 1h2v1h-2zM1 2h1v1h-1zM4 2h5v1h-5zM11 2h1v1h-1zM0 3h1v1h-1zM4 3h5v1h-5zM12 3h1v1h-1zM0 4h1v1h-1zM4 4h5v1h-5zM12 4h1v1h-1zM1 5h1v1h-1zM5 5h3v1h-3zM11 5h1v1h-1zM2 6h3v1h-3zM8 6h3v1h-3zM5 7h3v1h-3z" fill="#000"/></svg>
<svg style="left:20px;top:92px" width="9" height="10" viewBox="0 0 9 10" shape-rendering="crispEdges"><path d="M2 0h5v1h-5zM1 1h2v1h-2zM6 1h2v1h-2zM1 2h1v1h-1zM7 2h1v1h-1zM1 3h1v1h-1zM7 3h1v1h-1zM0 4h9v1h-9zM0 5h9v1h-9zM0 6h9v1h-9zM0 7h4v1h-4zM5 7h4v1h-4zM0 8h4v1h-4zM5 8h4v1h-4zM0 9h9v1h-9z" fill="#000"/></svg>
<div style="left:35px;top:93px;width:20px;height:9px;background:#ff00ff;box-shadow:inset 0 0 0 1px #ff0000"></div>
<div class="t" style="left:60px;top:92px;">Источники /IZA/</div>
<svg style="left:2px;top:106px" width="13" height="8" viewBox="0 0 13 8" shape-rendering="crispEdges"><path d="M4 0h5v1h-5zM2 1h2v1h-2zM5 1h3v1h-3zM9 1h2v1h-2zM1 2h1v1h-1zM4 2h5v1h-5zM11 2h1v1h-1zM0 3h1v1h-1zM4 3h5v1h-5zM12 3h1v1h-1zM0 4h1v1h-1zM4 4h5v1h-5zM12 4h1v1h-1zM1 5h1v1h-1zM5 5h3v1h-3zM11 5h1v1h-1zM2 6h3v1h-3zM8 6h3v1h-3zM5 7h3v1h-3z" fill="#000"/></svg>
<svg style="left:20px;top:105px" width="9" height="10" viewBox="0 0 9 10" shape-rendering="crispEdges"><path d="M2 0h5v1h-5zM1 1h2v1h-2zM6 1h2v1h-2zM1 2h1v1h-1zM7 2h1v1h-1zM1 3h1v1h-1zM7 3h1v1h-1zM0 4h9v1h-9zM0 5h9v1h-9zM0 6h9v1h-9zM0 7h4v1h-4zM5 7h4v1h-4zM0 8h4v1h-4zM5 8h4v1h-4zM0 9h9v1h-9z" fill="#000"/></svg>
<div style="left:35px;top:106px;width:20px;height:9px;background:#fff;box-shadow:inset 0 0 0 1px #0000ff"><svg style="position:absolute;left:0;top:0" width="20" height="10"><path d="M6 1l6 8M12 1l6 8" stroke="#a0a0a0"/></svg></div>
<div class="t" style="left:60px;top:105px;">Застройка /Build/</div>
</div>
<div style="left:417px;top:150px;width:16px;height:115px;background-color:#fff;background-image:linear-gradient(45deg,#d4d0c8 25%,transparent 25%,transparent 75%,#d4d0c8 75%),linear-gradient(45deg,#d4d0c8 25%,transparent 25%,transparent 75%,#d4d0c8 75%);background-size:2px 2px;background-position:0 0,1px 1px"></div>
<div style="left:417px;top:150px;width:16px;height:16px;background:#d4d0c8;box-shadow:inset -1px -1px #404040,inset 1px 1px #d4d0c8,inset -2px -2px #808080,inset 2px 2px #fff"></div>
<svg style="left:417px;top:150px" width="16" height="16" viewBox="0 0 16 16" shape-rendering="crispEdges"><path d="M7 6h1v1h-1zM6 7h3v1h-3zM5 8h5v1h-5zM4 9h7v1h-7z" fill="#000"/></svg>
<div style="left:417px;top:166px;width:16px;height:51px;background:#d4d0c8;box-shadow:inset -1px -1px #404040,inset 1px 1px #d4d0c8,inset -2px -2px #808080,inset 2px 2px #fff"></div>
<div style="left:417px;top:249px;width:16px;height:16px;background:#d4d0c8;box-shadow:inset -1px -1px #404040,inset 1px 1px #d4d0c8,inset -2px -2px #808080,inset 2px 2px #fff"></div>
<svg style="left:417px;top:249px" width="16" height="16" viewBox="0 0 16 16" shape-rendering="crispEdges"><path d="M4 6h7v1h-7zM5 7h5v1h-5zM6 8h3v1h-3zM7 9h1v1h-1z" fill="#000"/></svg>
<div style="left:119px;top:277px;width:318px;height:163px;box-shadow:inset 1px 1px #808080,inset -1px -1px #fff,inset 2px 2px #fff,inset -2px -2px #808080"></div>
<div class="t" style="left:126px;top:272px;background:#d4d0c8;padding:0 1px">ПОЛЬЗОВАТЕЛЬСКИЕ</div>
<div style="left:121px;top:287px;width:313px;height:150px;background:#fff;box-shadow:inset 1px 1px #808080,inset -1px -1px #fff,inset 2px 2px #404040,inset -2px -2px #d4d0c8"></div>
<div style="left:181px;top:289px;width:251px;height:12px;background:#0a246a"></div>
<div style="left:123px;top:289px;width:59px;height:12px;border:1px dotted #0000ff;border-right:0;border-bottom:0"></div>
<div style="left:123px;top:301px;width:309px;height:1px;background:#f0d080"></div>
<svg style="left:125px;top:291px" width="13" height="8" viewBox="0 0 13 8" shape-rendering="crispEdges"><path d="M4 0h5v1h-5zM2 1h2v1h-2zM5 1h3v1h-3zM9 1h2v1h-2zM1 2h1v1h-1zM4 2h5v1h-5zM11 2h1v1h-1zM0 3h1v1h-1zM4 3h5v1h-5zM12 3h1v1h-1zM0 4h1v1h-1zM4 4h5v1h-5zM12 4h1v1h-1zM1 5h1v1h-1zM5 5h3v1h-3zM11 5h1v1h-1zM2 6h3v1h-3zM8 6h3v1h-3zM5 7h3v1h-3z" fill="#000"/></svg>
<svg style="left:143px;top:290px" width="13" height="10" viewBox="0 0 13 10" shape-rendering="crispEdges"><path d="M10 0h1v1h-1zM9 1h1v1h-1zM11 1h1v1h-1zM9 2h1v1h-1zM11 2h1v1h-1zM9 3h1v1h-1zM11 3h1v1h-1zM0 4h9v1h-9zM11 4h1v1h-1zM0 5h9v1h-9zM0 6h9v1h-9zM0 7h4v1h-4zM5 7h4v1h-4zM0 8h4v1h-4zM5 8h4v1h-4zM0 9h9v1h-9z" fill="#000"/></svg>
<div style="left:158px;top:291px;width:20px;height:9px;background:#ffff00;box-shadow:inset 0 0 0 1px #000"></div>
<div class="t" style="left:183px;top:290px;color:#fff">дома в жилой зоне</div>
<svg style="left:125px;top:304px" width="13" height="8" viewBox="0 0 13 8" shape-rendering="crispEdges"><path d="M4 0h5v1h-5zM2 1h2v1h-2zM5 1h3v1h-3zM9 1h2v1h-2zM1 2h1v1h-1zM4 2h5v1h-5zM11 2h1v1h-1zM0 3h1v1h-1zM4 3h5v1h-5zM12 3h1v1h-1zM0 4h1v1h-1zM4 4h5v1h-5zM12 4h1v1h-1zM1 5h1v1h-1zM5 5h3v1h-3zM11 5h1v1h-1zM2 6h3v1h-3zM8 6h3v1h-3zM5 7h3v1h-3z" fill="#000"/></svg>
<svg style="left:143px;top:303px" width="13" height="10" viewBox="0 0 13 10" shape-rendering="crispEdges"><path d="M10 0h1v1h-1zM9 1h1v1h-1zM11 1h1v1h-1zM9 2h1v1h-1zM11 2h1v1h-1zM9 3h1v1h-1zM11 3h1v1h-1zM0 4h9v1h-9zM11 4h1v1h-1zM0 5h9v1h-9zM0 6h9v1h-9zM0 7h4v1h-4zM5 7h4v1h-4zM0 8h4v1h-4zM5 8h4v1h-4zM0 9h9v1h-9z" fill="#000"/></svg>
<div style="left:158px;top:304px;width:20px;height:9px;background:#808080;box-shadow:inset 0 0 0 1px #000"></div>
<div class="t" style="left:183px;top:303px;">дороги и проезды</div>
<svg style="left:125px;top:317px" width="13" height="8" viewBox="0 0 13 8" shape-rendering="crispEdges"><path d="M4 0h5v1h-5zM2 1h2v1h-2zM5 1h3v1h-3zM9 1h2v1h-2zM1 2h1v1h-1zM4 2h5v1h-5zM11 2h1v1h-1zM0 3h1v1h-1zM4 3h5v1h-5zM12 3h1v1h-1zM0 4h1v1h-1zM4 4h5v1h-5zM12 4h1v1h-1zM1 5h1v1h-1zM5 5h3v1h-3zM11 5h1v1h-1zM2 6h3v1h-3zM8 6h3v1h-3zM5 7h3v1h-3z" fill="#000"/></svg>
<svg style="left:143px;top:316px" width="13" height="10" viewBox="0 0 13 10" shape-rendering="crispEdges"><path d="M10 0h1v1h-1zM9 1h1v1h-1zM11 1h1v1h-1zM9 2h1v1h-1zM11 2h1v1h-1zM9 3h1v1h-1zM11 3h1v1h-1zM0 4h9v1h-9zM11 4h1v1h-1zM0 5h9v1h-9zM0 6h9v1h-9zM0 7h4v1h-4zM5 7h4v1h-4zM0 8h4v1h-4zM5 8h4v1h-4zM0 9h9v1h-9z" fill="#000"/></svg>
<div style="left:158px;top:317px;width:20px;height:9px;background:#00ff00;box-shadow:inset 0 0 0 1px #000"></div>
<div class="t" style="left:183px;top:316px;">Жилая зона</div>
<svg style="left:125px;top:330px" width="13" height="8" viewBox="0 0 13 8" shape-rendering="crispEdges"><path d="M4 0h5v1h-5zM2 1h2v1h-2zM5 1h3v1h-3zM9 1h2v1h-2zM1 2h1v1h-1zM4 2h5v1h-5zM11 2h1v1h-1zM0 3h1v1h-1zM4 3h5v1h-5zM12 3h1v1h-1zM0 4h1v1h-1zM4 4h5v1h-5zM12 4h1v1h-1zM1 5h1v1h-1zM5 5h3v1h-3zM11 5h1v1h-1zM2 6h3v1h-3zM8 6h3v1h-3zM5 7h3v1h-3z" fill="#000"/></svg>
<svg style="left:143px;top:329px" width="13" height="10" viewBox="0 0 13 10" shape-rendering="crispEdges"><path d="M10 0h1v1h-1zM9 1h1v1h-1zM11 1h1v1h-1zM9 2h1v1h-1zM11 2h1v1h-1zM9 3h1v1h-1zM11 3h1v1h-1zM0 4h9v1h-9zM11 4h1v1h-1zM0 5h9v1h-9zM0 6h9v1h-9zM0 7h4v1h-4zM5 7h4v1h-4zM0 8h4v1h-4zM5 8h4v1h-4zM0 9h9v1h-9z" fill="#000"/></svg>
<div style="left:158px;top:330px;width:20px;height:9px;background:#808040;box-shadow:inset 0 0 0 1px #000"></div>
<div class="t" style="left:183px;top:329px;">Цеха и здания</div>
<svg style="left:125px;top:343px" width="13" height="8" viewBox="0 0 13 8" shape-rendering="crispEdges"><path d="M4 0h5v1h-5zM2 1h2v1h-2zM5 1h3v1h-3zM9 1h2v1h-2zM1 2h1v1h-1zM4 2h5v1h-5zM11 2h1v1h-1zM0 3h1v1h-1zM4 3h5v1h-5zM12 3h1v1h-1zM0 4h1v1h-1zM4 4h5v1h-5zM12 4h1v1h-1zM1 5h1v1h-1zM5 5h3v1h-3zM11 5h1v1h-1zM2 6h3v1h-3zM8 6h3v1h-3zM5 7h3v1h-3z" fill="#000"/></svg>
<svg style="left:143px;top:342px" width="13" height="10" viewBox="0 0 13 10" shape-rendering="crispEdges"><path d="M10 0h1v1h-1zM9 1h1v1h-1zM11 1h1v1h-1zM9 2h1v1h-1zM11 2h1v1h-1zM9 3h1v1h-1zM11 3h1v1h-1zM0 4h9v1h-9zM11 4h1v1h-1zM0 5h9v1h-9zM0 6h9v1h-9zM0 7h4v1h-4zM5 7h4v1h-4zM0 8h4v1h-4zM5 8h4v1h-4zM0 9h9v1h-9z" fill="#000"/></svg>
<div style="left:158px;top:343px;width:20px;height:9px;background:#fff;box-shadow:inset 0 0 0 1px #000"><svg style="position:absolute;left:0;top:0" width="20" height="10"><path d="M1 2l4 6 5-6 5 6 4-6" fill="none" stroke="#00e0ff" shape-rendering="auto"/></svg></div>
<div class="t" style="left:183px;top:342px;">&nbsp;Территория</div>
<svg style="left:125px;top:356px" width="13" height="8" viewBox="0 0 13 8" shape-rendering="crispEdges"><path d="M4 0h5v1h-5zM2 1h2v1h-2zM5 1h3v1h-3zM9 1h2v1h-2zM1 2h1v1h-1zM4 2h5v1h-5zM11 2h1v1h-1zM0 3h1v1h-1zM4 3h5v1h-5zM12 3h1v1h-1zM0 4h1v1h-1zM4 4h5v1h-5zM12 4h1v1h-1zM1 5h1v1h-1zM5 5h3v1h-3zM11 5h1v1h-1zM2 6h3v1h-3zM8 6h3v1h-3zM5 7h3v1h-3z" fill="#000"/></svg>
<svg style="left:143px;top:355px" width="13" height="10" viewBox="0 0 13 10" shape-rendering="crispEdges"><path d="M10 0h1v1h-1zM9 1h1v1h-1zM11 1h1v1h-1zM9 2h1v1h-1zM11 2h1v1h-1zM9 3h1v1h-1zM11 3h1v1h-1zM0 4h9v1h-9zM11 4h1v1h-1zM0 5h9v1h-9zM0 6h9v1h-9zM0 7h4v1h-4zM5 7h4v1h-4zM0 8h4v1h-4zM5 8h4v1h-4zM0 9h9v1h-9z" fill="#000"/></svg>
<div style="left:158px;top:356px;width:20px;height:9px;background:#fff;box-shadow:inset 0 0 0 1px #000"></div>
<div class="t" style="left:183px;top:355px;">подложка</div>
<div style="left:119px;top:448px;width:318px;height:151px;box-shadow:inset 1px 1px #808080,inset -1px -1px #fff,inset 2px 2px #fff,inset -2px -2px #808080"></div>
<div class="t" style="left:126px;top:443px;background:#d4d0c8;padding:0 1px">Изолинии</div>
<div style="left:121px;top:458px;width:313px;height:140px;background:#fff;box-shadow:inset 1px 1px #808080,inset -1px -1px #fff,inset 2px 2px #404040,inset -2px -2px #d4d0c8"></div>
<div style="left:123px;top:460px;width:294px;height:135px;overflow:hidden">
<svg style="left:2px;top:2px" width="13" height="8" viewBox="0 0 13 8" shape-rendering="crispEdges"><path d="M4 0h5v1h-5zM2 1h2v1h-2zM5 1h3v1h-3zM9 1h2v1h-2zM1 2h1v1h-1zM4 2h5v1h-5zM11 2h1v1h-1zM0 3h1v1h-1zM4 3h5v1h-5zM12 3h1v1h-1zM0 4h1v1h-1zM4 4h5v1h-5zM12 4h1v1h-1zM1 5h1v1h-1zM5 5h3v1h-3zM11 5h1v1h-1zM2 6h3v1h-3zM8 6h3v1h-3zM5 7h3v1h-3z" fill="#000"/></svg>
<div style="left:35px;top:2px;width:20px;height:8px;background:#e8fcff"></div>
<div class="t" style="left:60px;top:1px;">0-05</div>
<svg style="left:2px;top:15px" width="13" height="8" viewBox="0 0 13 8" shape-rendering="crispEdges"><path d="M4 0h5v1h-5zM2 1h2v1h-2zM5 1h3v1h-3zM9 1h2v1h-2zM1 2h1v1h-1zM4 2h5v1h-5zM11 2h1v1h-1zM0 3h1v1h-1zM4 3h5v1h-5zM12 3h1v1h-1zM0 4h1v1h-1zM4 4h5v1h-5zM12 4h1v1h-1zM1 5h1v1h-1zM5 5h3v1h-3zM11 5h1v1h-1zM2 6h3v1h-3zM8 6h3v1h-3zM5 7h3v1h-3z" fill="#000"/></svg>
<div style="left:35px;top:15px;width:20px;height:8px;background:#d8ffe4"></div>
<div class="t" style="left:60px;top:14px;">0-10</div>
<svg style="left:2px;top:28px" width="13" height="8" viewBox="0 0 13 8" shape-rendering="crispEdges"><path d="M4 0h5v1h-5zM2 1h2v1h-2zM5 1h3v1h-3zM9 1h2v1h-2zM1 2h1v1h-1zM4 2h5v1h-5zM11 2h1v1h-1zM0 3h1v1h-1zM4 3h5v1h-5zM12 3h1v1h-1zM0 4h1v1h-1zM4 4h5v1h-5zM12 4h1v1h-1zM1 5h1v1h-1zM5 5h3v1h-3zM11 5h1v1h-1zM2 6h3v1h-3zM8 6h3v1h-3zM5 7h3v1h-3z" fill="#000"/></svg>
<div style="left:35px;top:28px;width:20px;height:8px;background:#c8ffd8"></div>
<div class="t" style="left:60px;top:27px;">0-20</div>
<svg style="left:2px;top:41px" width="13" height="8" viewBox="0 0 13 8" shape-rendering="crispEdges"><path d="M4 0h5v1h-5zM2 1h2v1h-2zM5 1h3v1h-3zM9 1h2v1h-2zM1 2h1v1h-1zM4 2h5v1h-5zM11 2h1v1h-1zM0 3h1v1h-1zM4 3h5v1h-5zM12 3h1v1h-1zM0 4h1v1h-1zM4 4h5v1h-5zM12 4h1v1h-1zM1 5h1v1h-1zM5 5h3v1h-3zM11 5h1v1h-1zM2 6h3v1h-3zM8 6h3v1h-3zM5 7h3v1h-3z" fill="#000"/></svg>
<div style="left:35px;top:41px;width:20px;height:8px;background:#b8ffcc"></div>
<div class="t" style="left:60px;top:40px;">0-30</div>
<svg style="left:2px;top:54px" width="13" height="8" viewBox="0 0 13 8" shape-rendering="crispEdges"><path d="M4 0h5v1h-5zM2 1h2v1h-2zM5 1h3v1h-3zM9 1h2v1h-2zM1 2h1v1h-1zM4 2h5v1h-5zM11 2h1v1h-1zM0 3h1v1h-1zM4 3h5v1h-5zM12 3h1v1h-1zM0 4h1v1h-1zM4 4h5v1h-5zM12 4h1v1h-1zM1 5h1v1h-1zM5 5h3v1h-3zM11 5h1v1h-1zM2 6h3v1h-3zM8 6h3v1h-3zM5 7h3v1h-3z" fill="#000"/></svg>
<div style="left:35px;top:54px;width:20px;height:8px;background:#a8ffc0"></div>
<div class="t" style="left:60px;top:53px;">0-40</div>
<svg style="left:2px;top:67px" width="13" height="8" viewBox="0 0 13 8" shape-rendering="crispEdges"><path d="M4 0h5v1h-5zM2 1h2v1h-2zM5 1h3v1h-3zM9 1h2v1h-2zM1 2h1v1h-1zM4 2h5v1h-5zM11 2h1v1h-1zM0 3h1v1h-1zM4 3h5v1h-5zM12 3h1v1h-1zM0 4h1v1h-1zM4 4h5v1h-5zM12 4h1v1h-1zM1 5h1v1h-1zM5 5h3v1h-3zM11 5h1v1h-1zM2 6h3v1h-3zM8 6h3v1h-3zM5 7h3v1h-3z" fill="#000"/></svg>
<div style="left:35px;top:67px;width:20px;height:8px;background:#98ffb4"></div>
<div class="t" style="left:60px;top:66px;">0-50</div>
<svg style="left:2px;top:80px" width="13" height="8" viewBox="0 0 13 8" shape-rendering="crispEdges"><path d="M4 0h5v1h-5zM2 1h2v1h-2zM5 1h3v1h-3zM9 1h2v1h-2zM1 2h1v1h-1zM4 2h5v1h-5zM11 2h1v1h-1zM0 3h1v1h-1zM4 3h5v1h-5zM12 3h1v1h-1zM0 4h1v1h-1zM4 4h5v1h-5zM12 4h1v1h-1zM1 5h1v1h-1zM5 5h3v1h-3zM11 5h1v1h-1zM2 6h3v1h-3zM8 6h3v1h-3zM5 7h3v1h-3z" fill="#000"/></svg>
<div style="left:35px;top:80px;width:20px;height:8px;background:#88ffa4"></div>
<div class="t" style="left:60px;top:79px;">0-60</div>
<svg style="left:2px;top:93px" width="13" height="8" viewBox="0 0 13 8" shape-rendering="crispEdges"><path d="M4 0h5v1h-5zM2 1h2v1h-2zM5 1h3v1h-3zM9 1h2v1h-2zM1 2h1v1h-1zM4 2h5v1h-5zM11 2h1v1h-1zM0 3h1v1h-1zM4 3h5v1h-5zM12 3h1v1h-1zM0 4h1v1h-1zM4 4h5v1h-5zM12 4h1v1h-1zM1 5h1v1h-1zM5 5h3v1h-3zM11 5h1v1h-1zM2 6h3v1h-3zM8 6h3v1h-3zM5 7h3v1h-3z" fill="#000"/></svg>
<div style="left:35px;top:93px;width:20px;height:8px;background:#80ff90"></div>
<div class="t" style="left:60px;top:92px;">0-70</div>
<svg style="left:2px;top:106px" width="13" height="8" viewBox="0 0 13 8" shape-rendering="crispEdges"><path d="M4 0h5v1h-5zM2 1h2v1h-2zM5 1h3v1h-3zM9 1h2v1h-2zM1 2h1v1h-1zM4 2h5v1h-5zM11 2h1v1h-1zM0 3h1v1h-1zM4 3h5v1h-5zM12 3h1v1h-1zM0 4h1v1h-1zM4 4h5v1h-5zM12 4h1v1h-1zM1 5h1v1h-1zM5 5h3v1h-3zM11 5h1v1h-1zM2 6h3v1h-3zM8 6h3v1h-3zM5 7h3v1h-3z" fill="#000"/></svg>
<div style="left:35px;top:106px;width:20px;height:8px;background:#a8ff88"></div>
<div class="t" style="left:60px;top:105px;">0-80</div>
<svg style="left:2px;top:119px" width="13" height="8" viewBox="0 0 13 8" shape-rendering="crispEdges"><path d="M4 0h5v1h-5zM2 1h2v1h-2zM5 1h3v1h-3zM9 1h2v1h-2zM1 2h1v1h-1zM4 2h5v1h-5zM11 2h1v1h-1zM0 3h1v1h-1zM4 3h5v1h-5zM12 3h1v1h-1zM0 4h1v1h-1zM4 4h5v1h-5zM12 4h1v1h-1zM1 5h1v1h-1zM5 5h3v1h-3zM11 5h1v1h-1zM2 6h3v1h-3zM8 6h3v1h-3zM5 7h3v1h-3z" fill="#000"/></svg>
<div style="left:35px;top:119px;width:20px;height:8px;background:#c8ff90"></div>
<div class="t" style="left:60px;top:118px;">0-90</div>
<svg style="left:2px;top:132px" width="13" height="8" viewBox="0 0 13 8" shape-rendering="crispEdges"><path d="M4 0h5v1h-5zM2 1h2v1h-2zM5 1h3v1h-3zM9 1h2v1h-2zM1 2h1v1h-1zM4 2h5v1h-5zM11 2h1v1h-1zM0 3h1v1h-1zM4 3h5v1h-5zM12 3h1v1h-1zM0 4h1v1h-1zM4 4h5v1h-5zM12 4h1v1h-1zM1 5h1v1h-1zM5 5h3v1h-3zM11 5h1v1h-1zM2 6h3v1h-3zM8 6h3v1h-3zM5 7h3v1h-3z" fill="#000"/></svg>
<div style="left:35px;top:132px;width:20px;height:8px;background:#ffffa0"></div>
<div class="t" style="left:60px;top:131px;">1-00</div>
</div>
<div style="left:417px;top:460px;width:16px;height:136px;background-color:#fff;background-image:linear-gradient(45deg,#d4d0c8 25%,transparent 25%,transparent 75%,#d4d0c8 75%),linear-gradient(45deg,#d4d0c8 25%,transparent 25%,transparent 75%,#d4d0c8 75%);background-size:2px 2px;background-position:0 0,1px 1px"></div>
<div style="left:417px;top:460px;width:16px;height:16px;background:#d4d0c8;box-shadow:inset -1px -1px #404040,inset 1px 1px #d4d0c8,inset -2px -2px #808080,inset 2px 2px #fff"></div>
<svg style="left:417px;top:460px" width="16" height="16" viewBox="0 0 16 16" shape-rendering="crispEdges"><path d="M7 6h1v1h-1zM6 7h3v1h-3zM5 8h5v1h-5zM4 9h7v1h-7z" fill="#000"/></svg>
<div style="left:417px;top:476px;width:16px;height:37px;background:#d4d0c8;box-shadow:inset -1px -1px #404040,inset 1px 1px #d4d0c8,inset -2px -2px #808080,inset 2px 2px #fff"></div>
<div style="left:417px;top:580px;width:16px;height:16px;background:#d4d0c8;box-shadow:inset -1px -1px #404040,inset 1px 1px #d4d0c8,inset -2px -2px #808080,inset 2px 2px #fff"></div>
<svg style="left:417px;top:580px" width="16" height="16" viewBox="0 0 16 16" shape-rendering="crispEdges"><path d="M4 6h7v1h-7zM5 7h5v1h-5zM6 8h3v1h-3zM7 9h1v1h-1z" fill="#000"/></svg>
<div style="left:119px;top:599px;width:318px;height:33px;background:#d4d0c8;box-shadow:inset 1px 1px #fff,inset -1px -1px #808080"></div>
<div style="left:127px;top:607px;width:23px;height:22px;background:#d4d0c8;box-shadow:inset -1px -1px #404040,inset 1px 1px #fff,inset -2px -2px #808080,inset 2px 2px #d4d0c8"></div>
<div style="left:151px;top:607px;width:23px;height:22px;background:#d4d0c8;box-shadow:inset -1px -1px #404040,inset 1px 1px #fff,inset -2px -2px #808080,inset 2px 2px #d4d0c8"></div>
<div style="left:183px;top:607px;width:23px;height:22px;background:#d4d0c8;box-shadow:inset -1px -1px #404040,inset 1px 1px #fff,inset -2px -2px #808080,inset 2px 2px #d4d0c8"></div>
<div style="left:207px;top:607px;width:23px;height:22px;background:#d4d0c8;box-shadow:inset -1px -1px #404040,inset 1px 1px #fff,inset -2px -2px #808080,inset 2px 2px #d4d0c8"></div>
<svg style="left:131px;top:610px" width="16" height="16" viewBox="0 0 16 16" shape-rendering="crispEdges"><path d="M0 4h6v-2l3 3-3 3v-2h-6z" fill="#0000ff"/><rect x="9" y="4" width="2" height="2" fill="#ff0000"/><path d="M4 9v6M1 12h6" stroke="#ff0000" stroke-width="2"/><path d="M12 1h2v1h-2zM12 7h2v1h-2zM12 10h2v1h-2zM12 13h2v1h-2z" fill="#000"/></svg>
<svg style="left:155px;top:610px" width="16" height="16" viewBox="0 0 16 16" shape-rendering="crispEdges"><path d="M11 4h-7v-2l-3 3 3 3v-2h7z" fill="#0000ff"/><rect x="11" y="4" width="2" height="2" fill="#ff0000"/><path d="M1 12h6" stroke="#ff0000" stroke-width="2"/><path d="M12 1h2v1h-2zM12 7h2v1h-2zM12 10h2v1h-2zM12 13h2v1h-2z" fill="#000"/></svg>
<svg style="left:186px;top:609px" width="17" height="18" viewBox="0 0 17 18" shape-rendering="crispEdges"><path d="M8.5 1L1 16l7.5-3z" fill="#0000ff"/><path d="M8.5 1L16 16l-7.5-3z" fill="#000080"/><path d="M8.5 1v16" stroke="#ff0000"/></svg>
<svg style="left:210px;top:609px" width="17" height="18" viewBox="0 0 17 18" shape-rendering="crispEdges"><path d="M8.5 17L1 1l7.5 3z" fill="#0000ff"/><path d="M8.5 17L16 1l-7.5 3z" fill="#000080"/><path d="M8.5 1v16" stroke="#ff0000"/></svg>
<div style="left:438px;top:137px;width:468px;height:496px;box-shadow:inset 1px 1px #808080,inset -1px -1px #fff,inset 2px 2px #fff,inset -2px -2px #808080"></div>
<div class="t" style="left:445px;top:133px;background:#d4d0c8;padding:0 1px">Свойства слоя</div>
<div class="t" style="left:456px;top:151px;">Наименование</div>
<div style="left:534px;top:148px;width:369px;height:21px;background:#fff;box-shadow:inset 1px 1px #808080,inset -1px -1px #fff,inset 2px 2px #404040,inset -2px -2px #d4d0c8"></div>
<div class="t" style="left:537px;top:152px;">дома в жилой зоне</div>
<div style="left:446px;top:177px;width:456px;height:34px;box-shadow:inset 1px 1px #808080,inset -1px -1px #fff,inset 2px 2px #fff,inset -2px -2px #808080"></div>
<div class="t" style="left:453px;top:172px;background:#d4d0c8;padding:0 1px">Атрибуты слоя</div>
<div style="left:454px;top:190px;width:13px;height:13px;background:#fff;box-shadow:inset 1px 1px #808080,inset -1px -1px #fff,inset 2px 2px #404040,inset -2px -2px #d4d0c8"></div>
<svg style="left:457px;top:193px" width="7" height="7" viewBox="0 0 7 7" shape-rendering="crispEdges"><path d="M6 0h1v1h-1zM5 1h2v1h-2zM0 2h1v1h-1zM4 2h3v1h-3zM0 3h2v1h-2zM3 3h3v1h-3zM0 4h5v1h-5zM1 5h3v1h-3zM2 6h1v1h-1z" fill="#000"/></svg>
<div class="t" style="left:473px;top:190px;">Видимый</div>
<div style="left:558px;top:190px;width:13px;height:13px;background:#fff;box-shadow:inset 1px 1px #808080,inset -1px -1px #fff,inset 2px 2px #404040,inset -2px -2px #d4d0c8"></div>
<svg style="left:561px;top:193px" width="7" height="7" viewBox="0 0 7 7" shape-rendering="crispEdges"><path d="M6 0h1v1h-1zM5 1h2v1h-2zM0 2h1v1h-1zM4 2h3v1h-3zM0 3h2v1h-2zM3 3h3v1h-3zM0 4h5v1h-5zM1 5h3v1h-3zM2 6h1v1h-1z" fill="#000"/></svg>
<div class="t" style="left:577px;top:190px;">Редактируемый</div>
<div style="left:678px;top:190px;width:13px;height:13px;background:#fff;box-shadow:inset 1px 1px #808080,inset -1px -1px #fff,inset 2px 2px #404040,inset -2px -2px #d4d0c8"></div>
<div class="t" style="left:696px;top:190px;">Контурный</div>
<div style="left:768px;top:190px;width:13px;height:13px;background:#fff;box-shadow:inset 1px 1px #808080,inset -1px -1px #fff,inset 2px 2px #404040,inset -2px -2px #d4d0c8"></div>
<div class="t" style="left:786px;top:190px;">Конт. при печати</div>
<div style="left:446px;top:217px;width:224px;height:59px;box-shadow:inset 1px 1px #808080,inset -1px -1px #fff,inset 2px 2px #fff,inset -2px -2px #808080"></div>
<div class="t" style="left:453px;top:212px;background:#d4d0c8;padding:0 1px">Линия</div>
<div class="t" style="left:479px;top:229px;">Цвет</div>
<div style="left:510px;top:224px;width:129px;height:18px;background:#000"></div>
<svg style="left:642px;top:224px" width="17" height="17" viewBox="0 0 17 17" shape-rendering="crispEdges"><rect x="0" y="0" width="10" height="10" fill="#000"/><rect x="1" y="1" width="3" height="3" fill="#ff0000"/><path d="M7 2h1v1h1v1h-1v1h-1v-1h-1v-1h1z" fill="#ffff00"/><path d="M3 5h1v1h1v1h1v1h-5v-1h1v-1h1z" fill="#0000ff"/><circle cx="12.5" cy="3.5" r="2.6" fill="none" stroke="#000" stroke-width="1" shape-rendering="auto"/><path d="M6 10.5L12 6.5Q14.5 5.5 15 8.5Q15 10 13 11L8 15Q6 15.5 5.5 13Z" fill="#fff" stroke="#000" stroke-width="1" shape-rendering="auto"/><path d="M8 11.5h2M11 9h1" stroke="#000"/></svg>
<div class="t" style="left:485px;top:253px;">Тип</div>
<div style="left:511px;top:244px;width:152px;height:26px;background:#fff;box-shadow:inset 1px 1px #808080,inset -1px -1px #fff,inset 2px 2px #404040,inset -2px -2px #d4d0c8"></div>
<div style="left:517px;top:257px;width:41px;height:1px;background:#000"></div>
<div class="t" style="left:563px;top:249px;color:#808080">сплошная</div>
<div style="left:645px;top:246px;width:16px;height:21px;background:#d4d0c8;box-shadow:inset -1px -1px #404040,inset 1px 1px #d4d0c8,inset -2px -2px #808080,inset 2px 2px #fff"></div>
<svg style="left:645px;top:246px" width="16" height="21" viewBox="0 0 16 21" shape-rendering="crispEdges"><path d="M4 9h7v1h-7zM5 10h5v1h-5zM6 11h3v1h-3zM7 12h1v1h-1z" fill="#000"/></svg>
<div style="left:679px;top:217px;width:223px;height:59px;box-shadow:inset 1px 1px #808080,inset -1px -1px #fff,inset 2px 2px #fff,inset -2px -2px #808080"></div>
<div class="t" style="left:685px;top:212px;background:#d4d0c8;padding:0 1px">Полигон</div>
<div class="t" style="left:702px;top:228px;">Заливка</div>
<div style="left:750px;top:224px;width:121px;height:19px;background:#ffff00;box-shadow:inset 0 0 0 1px #000"></div>
<svg style="left:874px;top:224px" width="17" height="17" viewBox="0 0 17 17" shape-rendering="crispEdges"><rect x="0" y="0" width="10" height="10" fill="#000"/><rect x="1" y="1" width="3" height="3" fill="#ff0000"/><path d="M7 2h1v1h1v1h-1v1h-1v-1h-1v-1h1z" fill="#ffff00"/><path d="M3 5h1v1h1v1h1v1h-5v-1h1v-1h1z" fill="#0000ff"/><circle cx="12.5" cy="3.5" r="2.6" fill="none" stroke="#000" stroke-width="1" shape-rendering="auto"/><path d="M6 10.5L12 6.5Q14.5 5.5 15 8.5Q15 10 13 11L8 15Q6 15.5 5.5 13Z" fill="#fff" stroke="#000" stroke-width="1" shape-rendering="auto"/><path d="M8 11.5h2M11 9h1" stroke="#000"/></svg>
<div class="t" style="left:690px;top:253px;">Штриховка</div>
<div style="left:750px;top:244px;width:145px;height:25px;background:#fff;box-shadow:inset 1px 1px #808080,inset -1px -1px #fff,inset 2px 2px #404040,inset -2px -2px #d4d0c8"></div>
<div style="left:755px;top:249px;width:34px;height:15px;background:#ffff00"></div>
<div class="t" style="left:792px;top:249px;color:#808080">сплошная</div>
<div style="left:877px;top:246px;width:16px;height:21px;background:#d4d0c8;box-shadow:inset -1px -1px #404040,inset 1px 1px #d4d0c8,inset -2px -2px #808080,inset 2px 2px #fff"></div>
<svg style="left:877px;top:246px" width="16" height="21" viewBox="0 0 16 21" shape-rendering="crispEdges"><path d="M4 9h7v1h-7zM5 10h5v1h-5zM6 11h3v1h-3zM7 12h1v1h-1z" fill="#000"/></svg>
<div style="left:446px;top:281px;width:456px;height:53px;box-shadow:inset 1px 1px #808080,inset -1px -1px #fff,inset 2px 2px #fff,inset -2px -2px #808080"></div>
<div class="t" style="left:453px;top:277px;background:#d4d0c8;padding:0 1px">Тип точки</div>
<svg style="left:455px;top:293px" width="12" height="12" viewBox="0 0 12 12" shape-rendering="crispEdges"><path d="M4 0h4v1h2v1h1v2h1v4h-1v2h-1v1h-2v1h-4v-1h-2v-1h-1v-2h-1v-4h1v-2h1v-1h2z" fill="#fff"/><path d="M4 0h4v1h-4zM2 1h2v1h-2zM8 1h2v1h-2zM1 2h1v2h-1zM0 4h1v4h-1zM1 8h1v2h-1z" fill="#808080"/><path d="M4 1h4v1h-4zM2 2h2v1h-2zM8 2h2v1h-2zM2 3h-1v1h1zM1 4h1v4h-1zM2 8h-1v1h1z" fill="#404040"/><path d="M5 4h2v1h1v2h-1v1h-2v-1h-1v-2h1z" fill="#000"/></svg>
<div class="t" style="left:473px;top:294px;">круг</div>
<svg style="left:455px;top:313px" width="12" height="12" viewBox="0 0 12 12" shape-rendering="crispEdges"><path d="M4 0h4v1h2v1h1v2h1v4h-1v2h-1v1h-2v1h-4v-1h-2v-1h-1v-2h-1v-4h1v-2h1v-1h2z" fill="#fff"/><path d="M4 0h4v1h-4zM2 1h2v1h-2zM8 1h2v1h-2zM1 2h1v2h-1zM0 4h1v4h-1zM1 8h1v2h-1z" fill="#808080"/><path d="M4 1h4v1h-4zM2 2h2v1h-2zM8 2h2v1h-2zM2 3h-1v1h1zM1 4h1v4h-1zM2 8h-1v1h1z" fill="#404040"/></svg>
<div class="t" style="left:473px;top:314px;">квадрат</div>
<svg style="left:604px;top:293px" width="12" height="12" viewBox="0 0 12 12" shape-rendering="crispEdges"><path d="M4 0h4v1h2v1h1v2h1v4h-1v2h-1v1h-2v1h-4v-1h-2v-1h-1v-2h-1v-4h1v-2h1v-1h2z" fill="#fff"/><path d="M4 0h4v1h-4zM2 1h2v1h-2zM8 1h2v1h-2zM1 2h1v2h-1zM0 4h1v4h-1zM1 8h1v2h-1z" fill="#808080"/><path d="M4 1h4v1h-4zM2 2h2v1h-2zM8 2h2v1h-2zM2 3h-1v1h1zM1 4h1v4h-1zM2 8h-1v1h1z" fill="#404040"/></svg>
<div class="t" style="left:621px;top:294px;">треугольник</div>
<svg style="left:604px;top:313px" width="12" height="12" viewBox="0 0 12 12" shape-rendering="crispEdges"><path d="M4 0h4v1h2v1h1v2h1v4h-1v2h-1v1h-2v1h-4v-1h-2v-1h-1v-2h-1v-4h1v-2h1v-1h2z" fill="#fff"/><path d="M4 0h4v1h-4zM2 1h2v1h-2zM8 1h2v1h-2zM1 2h1v2h-1zM0 4h1v4h-1zM1 8h1v2h-1z" fill="#808080"/><path d="M4 1h4v1h-4zM2 2h2v1h-2zM8 2h2v1h-2zM2 3h-1v1h1zM1 4h1v4h-1zM2 8h-1v1h1z" fill="#404040"/></svg>
<div class="t" style="left:621px;top:314px;">ромб</div>
<div class="t" style="left:460px;top:344px;">Шрифт текста</div>
<div style="left:534px;top:342px;width:337px;height:25px;background:#fff;box-shadow:inset 1px 1px #808080,inset -1px -1px #fff,inset 2px 2px #404040,inset -2px -2px #d4d0c8"></div>
<div class="t" style="left:537px;top:346px;font-size:15px;line-height:16px;letter-spacing:-0.3px">Arial</div>
<svg style="left:874px;top:348px" width="16" height="12" viewBox="0 0 16 12" shape-rendering="crispEdges"><path d="M11 0h1v1h-1zM10 1h2v1h-2zM10 2h3v1h-3zM3 3h1v1h-1zM10 3h1v1h-1zM12 3h2v1h-2zM3 4h2v1h-2zM9 4h1v1h-1zM12 4h2v1h-2zM2 5h1v1h-1zM4 5h1v1h-1zM9 5h1v1h-1zM12 5h2v1h-2zM2 6h1v1h-1zM4 6h2v1h-2zM9 6h5v1h-5zM1 7h5v1h-5zM8 7h1v1h-1zM13 7h2v1h-2zM1 8h1v1h-1zM5 8h2v1h-2zM8 8h1v1h-1zM13 8h2v1h-2zM0 9h1v1h-1zM5 9h2v1h-2zM8 9h1v1h-1zM13 9h2v1h-2zM0 10h3v1h-3zM4 10h6v1h-6zM12 10h4v1h-4z" fill="#000"/><path d="M6 0h5v1h-5zM7 1h3v1h-3zM4 2h2v1h-2zM8 2h1v1h-1z" fill="#ff0000"/></svg>
<div style="left:446px;top:379px;width:224px;height:74px;box-shadow:inset 1px 1px #808080,inset -1px -1px #fff,inset 2px 2px #fff,inset -2px -2px #808080"></div>
<div class="t" style="left:453px;top:373px;background:#d4d0c8;padding:0 1px">Масштабные размеры</div>
<div class="t" style="left:458px;top:389px;">Высота текста, пункты</div>
<div style="left:590px;top:385px;width:73px;height:20px;background:#fff;box-shadow:inset 1px 1px #808080,inset -1px -1px #fff,inset 2px 2px #404040,inset -2px -2px #d4d0c8"></div>
<div class="t" style="left:594px;top:389px;">28</div>
<div class="t" style="left:479px;top:411px;">Ширина&nbsp; линии, мм</div>
<div style="left:590px;top:406px;width:73px;height:19px;background:#fff;box-shadow:inset 1px 1px #808080,inset -1px -1px #fff,inset 2px 2px #404040,inset -2px -2px #d4d0c8"></div>
<div class="t" style="left:594px;top:409px;">0</div>
<div class="t" style="left:483px;top:430px;">Размер точки, мм</div>
<div style="left:595px;top:428px;width:72px;height:20px;background:#fff;box-shadow:inset 1px 1px #808080,inset -1px -1px #fff,inset 2px 2px #404040,inset -2px -2px #d4d0c8"></div>
<div class="t" style="left:599px;top:431px;">0</div>
<div style="left:678px;top:378px;width:224px;height:74px;box-shadow:inset 1px 1px #808080,inset -1px -1px #fff,inset 2px 2px #fff,inset -2px -2px #808080"></div>
<div class="t" style="left:685px;top:373px;background:#d4d0c8;padding:0 1px">Масштаб видимости слоя</div>
<div style="left:694px;top:394px;width:13px;height:13px;background:#fff;box-shadow:inset 1px 1px #808080,inset -1px -1px #fff,inset 2px 2px #404040,inset -2px -2px #d4d0c8"></div>
<div class="t" style="left:712px;top:394px;">от 1:</div>
<div style="left:743px;top:390px;width:104px;height:21px;background:#d4d0c8;box-shadow:inset 1px 1px #808080,inset -1px -1px #fff,inset 2px 2px #404040,inset -2px -2px #d4d0c8"></div>
<div class="t" style="left:746px;top:394px;color:#808080">0</div>
<div style="left:694px;top:426px;width:13px;height:13px;background:#fff;box-shadow:inset 1px 1px #808080,inset -1px -1px #fff,inset 2px 2px #404040,inset -2px -2px #d4d0c8"></div>
<div class="t" style="left:712px;top:426px;">до 1:</div>
<div style="left:743px;top:422px;width:104px;height:21px;background:#d4d0c8;box-shadow:inset 1px 1px #808080,inset -1px -1px #fff,inset 2px 2px #404040,inset -2px -2px #d4d0c8"></div>
<div class="t" style="left:746px;top:426px;color:#808080">0</div>
<div style="left:446px;top:460px;width:456px;height:62px;box-shadow:inset 1px 1px #808080,inset -1px -1px #fff,inset 2px 2px #fff,inset -2px -2px #808080"></div>
<div class="t" style="left:593px;top:456px;background:#d4d0c8;padding:0 1px">Условные обозначения по слою (при печати Карты-Схемы)</div>
<div class="t" style="left:474px;top:474px;">точка</div>
<div style="left:508px;top:474px;width:13px;height:13px;background:#fff;box-shadow:inset 1px 1px #808080,inset -1px -1px #fff,inset 2px 2px #404040,inset -2px -2px #d4d0c8"></div>
<div style="left:531px;top:471px;width:137px;height:21px;background:#d4d0c8;box-shadow:inset 1px 1px #808080,inset -1px -1px #fff,inset 2px 2px #404040,inset -2px -2px #d4d0c8"></div>
<div class="t" style="left:473px;top:496px;">линия</div>
<div style="left:508px;top:496px;width:13px;height:13px;background:#fff;box-shadow:inset 1px 1px #808080,inset -1px -1px #fff,inset 2px 2px #404040,inset -2px -2px #d4d0c8"></div>
<div style="left:531px;top:495px;width:137px;height:21px;background:#d4d0c8;box-shadow:inset 1px 1px #808080,inset -1px -1px #fff,inset 2px 2px #404040,inset -2px -2px #d4d0c8"></div>
<div class="t" style="left:680px;top:474px;">полигон</div>
<div style="left:726px;top:474px;width:13px;height:13px;background:#fff;box-shadow:inset 1px 1px #808080,inset -1px -1px #fff,inset 2px 2px #404040,inset -2px -2px #d4d0c8"></div>
<div style="left:744px;top:471px;width:145px;height:21px;background:#d4d0c8;box-shadow:inset 1px 1px #808080,inset -1px -1px #fff,inset 2px 2px #404040,inset -2px -2px #d4d0c8"></div>
<div class="t" style="left:692px;top:496px;">текст</div>
<div style="left:726px;top:496px;width:13px;height:13px;background:#fff;box-shadow:inset 1px 1px #808080,inset -1px -1px #fff,inset 2px 2px #404040,inset -2px -2px #d4d0c8"></div>
<div style="left:744px;top:495px;width:145px;height:21px;background:#d4d0c8;box-shadow:inset 1px 1px #808080,inset -1px -1px #fff,inset 2px 2px #404040,inset -2px -2px #d4d0c8"></div>
<div style="left:113px;top:638px;width:798px;height:42px;box-shadow:inset 1px 1px #fff,inset -1px -1px #808080"></div>
<div style="left:121px;top:646px;width:75px;height:25px;background:#d4d0c8;box-shadow:inset -1px -1px #404040,inset 1px 1px #fff,inset -2px -2px #808080,inset 2px 2px #d4d0c8"></div>
<svg style="left:126px;top:655px" width="18" height="10" viewBox="0 0 18 10" shape-rendering="crispEdges"><path d="M0 9V6C0 2 3 0 6 0h2v3H6C4.5 3 3.5 4 3.5 6v3z" fill="#000"/><path d="M8 0c3 0 5 2 5.5 4H16l-4 5-4-5h2.5C10 3 9 3 8 3z" fill="#ff0000"/></svg>
<div class="t" style="left:149px;top:653px;">Закрыть</div>
<div style="left:201px;top:646px;width:129px;height:25px;background:#d4d0c8;box-shadow:inset -1px -1px #404040,inset 1px 1px #fff,inset -2px -2px #808080,inset 2px 2px #d4d0c8"></div>
<svg style="left:226px;top:651px" width="17" height="17" viewBox="0 0 17 17" shape-rendering="crispEdges"><circle cx="8.5" cy="8.5" r="8" fill="#e06010" shape-rendering="auto"/><circle cx="8.5" cy="8.5" r="6" fill="#f89040" stroke="#fff" stroke-width="1.2" shape-rendering="auto"/><path d="M5.5 8.5l2 2.5 4-5" fill="none" stroke="#fff" stroke-width="1.5" shape-rendering="auto"/></svg>
<div class="t" style="left:247px;top:653px;">Применить</div>
<div style="left:757px;top:647px;width:145px;height:25px;background:#d4d0c8;box-shadow:inset -1px -1px #404040,inset 1px 1px #fff,inset -2px -2px #808080,inset 2px 2px #d4d0c8"></div>
<div class="t" style="left:775px;top:654px;">Работа с изолиниями</div>
</body></html>
